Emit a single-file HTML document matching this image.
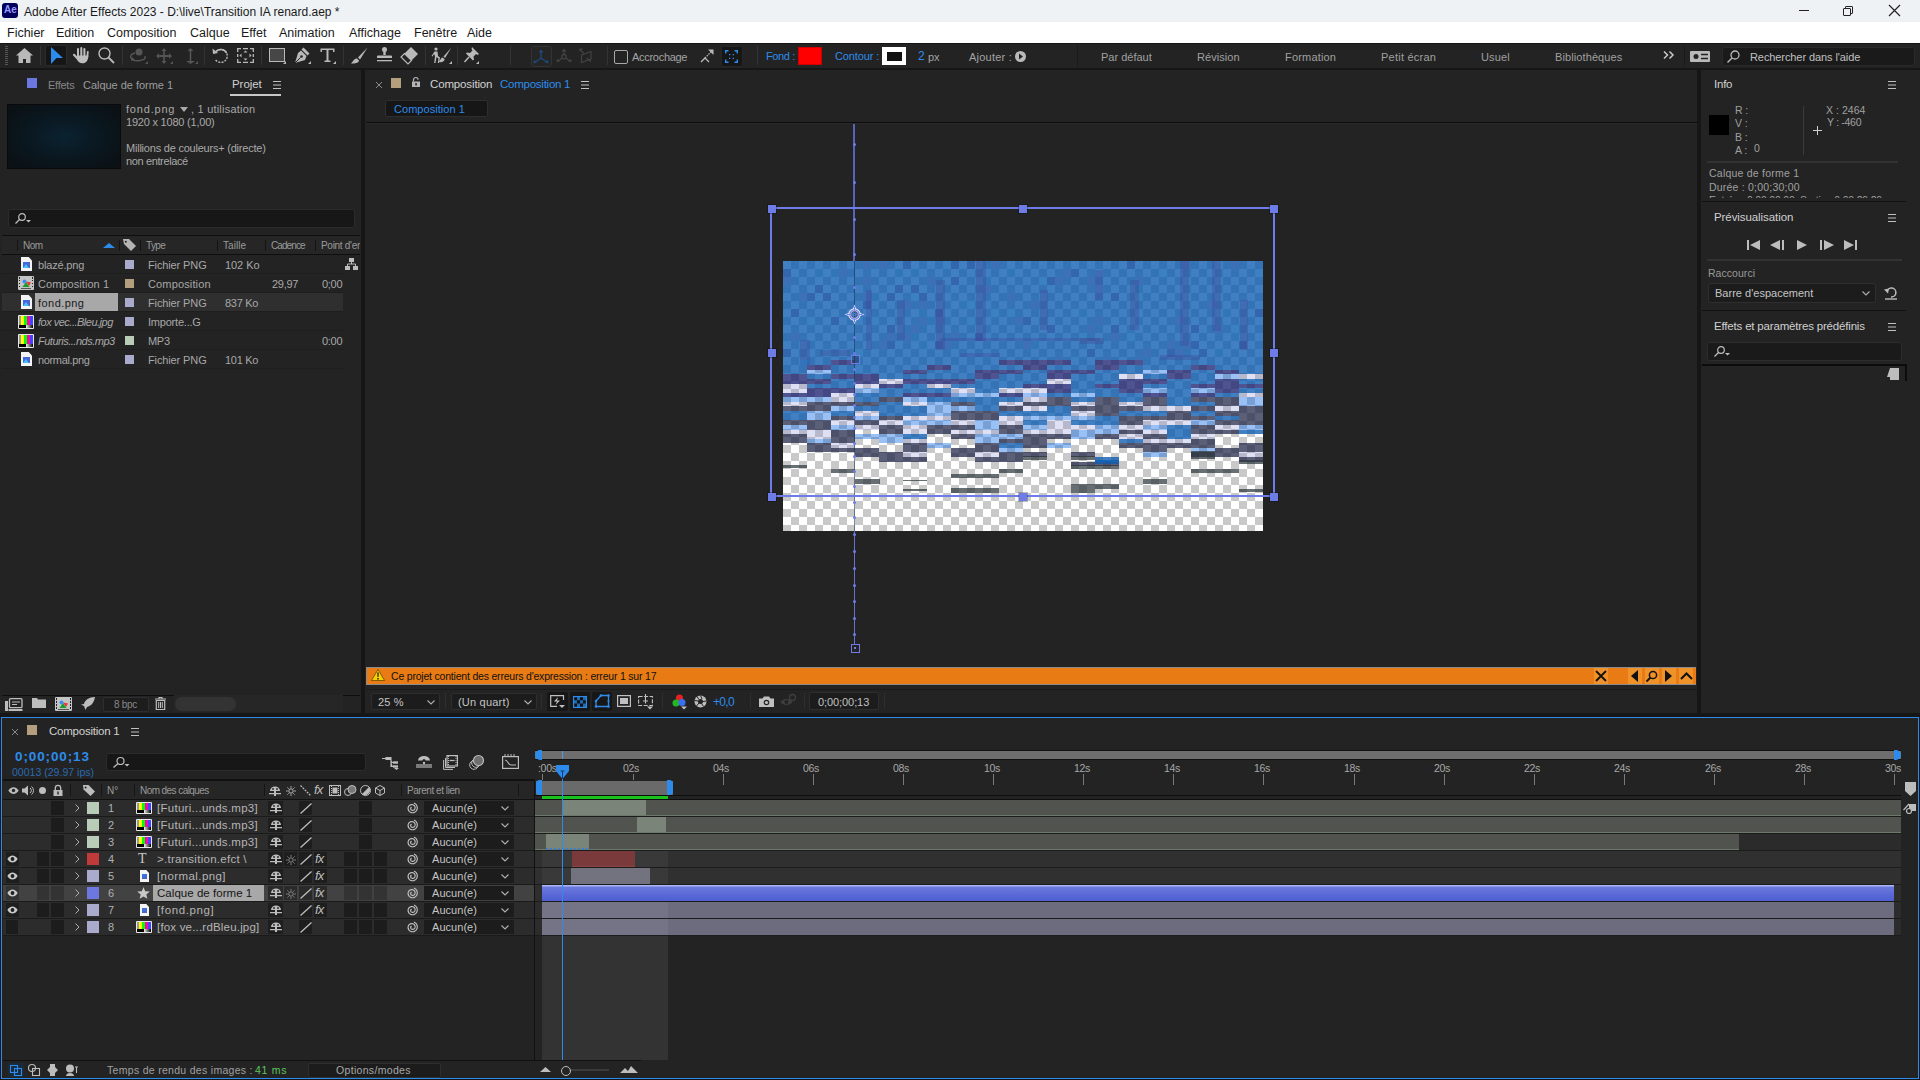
<!DOCTYPE html>
<html><head><meta charset="utf-8">
<style>
*{box-sizing:border-box;margin:0;padding:0}
html,body{width:1920px;height:1080px;overflow:hidden;background:#161616;font-family:"Liberation Sans",sans-serif;font-size:12px;color:#a2a2a2}
.a{position:absolute;white-space:pre}
.bl{color:#2d8ceb}
svg{position:absolute;overflow:visible}
</style></head><body>
<!-- TITLE BAR -->
<div class="a" style="left:0;top:0;width:1920px;height:22px;background:#eef2f5"></div>
<div class="a" style="left:2px;top:3px;width:16px;height:15px;background:#00005b;border-radius:3px"></div>
<div class="a" style="left:4px;top:4px;font-size:10px;font-weight:bold;color:#9999ff">Ae</div>
<div class="a" style="left:24px;top:5px;font-size:12px;color:#1a1a1a">Adobe After Effects 2023 - D:\live\Transition IA renard.aep *</div>
<!-- window controls -->
<div class="a" style="left:1799px;top:10px;width:10px;height:1px;background:#222"></div>
<div class="a" style="left:1845px;top:6px;width:8px;height:8px;border:1px solid #222;border-radius:1px"></div>
<div class="a" style="left:1843px;top:8px;width:8px;height:8px;border:1px solid #222;background:#eef2f5;border-radius:1px"></div>
<svg style="left:1889px;top:5px" width="11" height="11"><path d="M0 0L11 11M11 0L0 11" stroke="#222" stroke-width="1.2"/></svg>
<!-- MENU BAR -->
<div class="a" style="left:0;top:22px;width:1920px;height:21px;background:#fff"></div>
<div class="a" style="top:26px;left:0;font-size:12.5px;color:#1a1a1a">
<span class="a" style="top:0;left:7px">Fichier</span><span class="a" style="top:0;left:56px">Edition</span><span class="a" style="top:0;left:107px">Composition</span><span class="a" style="top:0;left:190px">Calque</span><span class="a" style="top:0;left:241px">Effet</span><span class="a" style="top:0;left:279px">Animation</span><span class="a" style="top:0;left:349px">Affichage</span><span class="a" style="top:0;left:414px">Fenêtre</span><span class="a" style="top:0;left:467px">Aide</span>
</div>
<!-- TOOLBAR -->
<div class="a" style="left:0;top:43px;width:1920px;height:25px;background:#232323"></div>
<div id="tb">
<div class="a" style="left:0;top:43px;width:1920px;height:1px;background:#141414"></div>
<!-- grip -->
<div class="a" style="left:5px;top:46px;width:3px;height:19px;background:repeating-linear-gradient(#555 0 1px,transparent 1px 2px)"></div>
<div class="a" style="left:40px;top:46px;width:1px;height:19px;background:#333"></div>
<div class="a" style="left:122px;top:46px;width:1px;height:19px;background:#333"></div>
<div class="a" style="left:204px;top:46px;width:1px;height:19px;background:#333"></div>
<div class="a" style="left:261px;top:46px;width:1px;height:19px;background:#333"></div>
<div class="a" style="left:343px;top:46px;width:1px;height:19px;background:#333"></div>
<div class="a" style="left:425px;top:46px;width:1px;height:19px;background:#333"></div>
<div class="a" style="left:457px;top:46px;width:1px;height:19px;background:#333"></div>
<div class="a" style="left:510px;top:46px;width:1px;height:19px;background:#333"></div>
<div class="a" style="left:607px;top:46px;width:1px;height:19px;background:#333"></div>
<div class="a" style="left:757px;top:46px;width:1px;height:19px;background:#333"></div>
<div class="a" style="left:1077px;top:43px;width:1px;height:24px;background:#1a1a1a"></div>
<div class="a" style="left:1684px;top:43px;width:1px;height:24px;background:#1a1a1a"></div>
<!-- home -->
<svg style="left:16px;top:48px" width="17" height="15" viewBox="0 0 17 15"><path d="M8.5 0L0 7.5h2.5V15h4.5v-4h3v4h4.5V7.5H17z" fill="#b9b9b9"/></svg>
<!-- selection box -->
<div class="a" style="left:45px;top:45px;width:22px;height:21px;background:#161616;border:1px solid #2a2a2a;border-radius:2px"></div>
<svg style="left:51px;top:47px" width="12" height="17" viewBox="0 0 12 17"><path d="M0 0L12 11L5.5 11L0 17z" fill="#2d8ceb"/></svg>
<!-- hand -->
<svg style="left:73px;top:47px" width="17" height="17" viewBox="0 0 17 17"><g stroke="#bdbdbd" stroke-linecap="round" fill="none"><path d="M5 10V2" stroke-width="2"/><path d="M8.3 10V1" stroke-width="2"/><path d="M11.4 10V2" stroke-width="2"/><path d="M14.2 11L14.8 5" stroke-width="1.8"/><path d="M1 7.8L5 12" stroke-width="2.2"/></g><path d="M4 8.5H15.5L14.5 13C13.5 15.5 11.5 16.3 9.3 16.3C6.8 16.3 5.2 15 4 12.5z" fill="#bdbdbd"/></svg>
<!-- zoom -->
<svg style="left:98px;top:47px" width="17" height="17" viewBox="0 0 17 17"><circle cx="6.5" cy="6.5" r="5.5" fill="none" stroke="#b9b9b9" stroke-width="1.4"/><path d="M10.5 10.5L16 16" stroke="#b9b9b9" stroke-width="1.8"/></svg>
<!-- rotation disabled -->
<svg style="left:129px;top:48px" width="19" height="16" viewBox="0 0 19 16"><circle cx="10" cy="4" r="3.5" fill="#555"/><path d="M6 5C2 6 1 8 2 10c1 2 5 3 9 2.5c4-.5 6-2 5-4.5" fill="none" stroke="#555" stroke-width="1.5"/><path d="M3 9l-1 4l4-1" fill="#555"/></svg>
<div class="a" style="left:145px;top:61px;width:0;height:0;border-left:3px solid transparent;border-bottom:3px solid #555"></div>
<!-- move disabled -->
<svg style="left:155px;top:48px" width="18" height="16" viewBox="0 0 18 16"><path d="M9 0L6.5 3h1.7v4H4V5.3L1 8l3 2.7V9h4.2v4H6.5L9 16l2.5-3H9.8V9H14v1.7L17 8l-3-2.7V7H9.8V3h1.7z" fill="#555"/></svg>
<div class="a" style="left:170px;top:61px;width:0;height:0;border-left:3px solid transparent;border-bottom:3px solid #555"></div>
<!-- z axis disabled -->
<svg style="left:183px;top:48px" width="15" height="16" viewBox="0 0 15 16"><path d="M7.5 0L4.5 3h2.2v10H3L7.5 16L12 13H8.3V3h2.2z" fill="#555"/></svg>
<div class="a" style="left:195px;top:61px;width:0;height:0;border-left:3px solid transparent;border-bottom:3px solid #555"></div>
<!-- rotate -->
<svg style="left:212px;top:47px" width="17" height="17" viewBox="0 0 17 17"><path d="M4 4.5A6.5 6.5 0 1 1 3 12" fill="none" stroke="#b9b9b9" stroke-width="1.4" stroke-dasharray="2 1.2"/><path d="M4 4.5A6.5 6.5 0 0 1 14.5 6" fill="none" stroke="#b9b9b9" stroke-width="1.5"/><path d="M0.5 1.5L1 7L6 6z" fill="#b9b9b9"/></svg>
<!-- roto frame -->
<svg style="left:237px;top:48px" width="17" height="15" viewBox="0 0 17 15"><path d="M0.7 4V0.7H4M6 0.7h5M13 0.7h3.3V4M16.3 6v3M16.3 11v3.3H13M11 14.3H6M4 14.3H0.7V11M0.7 9V6" fill="none" stroke="#b9b9b9" stroke-width="1.3"/><path d="M8.5 2.5L6.5 4.5h4zM8.5 12.5L6.5 10.5h4zM2.5 7.5L4.5 5.5v4zM14.5 7.5L12.5 5.5v4z" fill="#b9b9b9"/></svg>
<!-- rect -->
<div class="a" style="left:269px;top:48px;width:16px;height:14px;background:#474747;border:1.5px solid #b9b9b9"></div>
<div class="a" style="left:283px;top:61px;width:0;height:0;border-left:3px solid transparent;border-bottom:3px solid #b9b9b9"></div>
<!-- pen -->
<svg style="left:294px;top:47px" width="16" height="16" viewBox="0 0 16 16"><path d="M9.5 0.5L15.5 6.5L13.5 8.5L7.5 2.5z" fill="#b9b9b9"/><path d="M7 3.5L12.5 9L11 13L1 16L4 6z" fill="#b9b9b9"/><path d="M1 16L6.5 10.5" stroke="#232323" stroke-width="1"/><circle cx="7.5" cy="9.5" r="1.3" fill="#232323"/></svg>
<div class="a" style="left:308px;top:61px;width:0;height:0;border-left:3px solid transparent;border-bottom:3px solid #b9b9b9"></div>
<!-- T -->
<svg style="left:320px;top:48px" width="15" height="14" viewBox="0 0 15 14"><path d="M0.5 0.5H14.5V4H13V2H8.5V12.5H10.5V14H4.5V12.5H6.5V2H2V4H0.5z" fill="#b9b9b9"/></svg>
<div class="a" style="left:333px;top:61px;width:0;height:0;border-left:3px solid transparent;border-bottom:3px solid #b9b9b9"></div>
<!-- brush -->
<svg style="left:351px;top:47px" width="17" height="17" viewBox="0 0 17 17"><path d="M16.5 0.5L7 10.5L9 12.5z" fill="#b9b9b9"/><path d="M6 11.5C3 11.5 2.5 14 0 16.5C4 16.5 8 16 8 13.5z" fill="#b9b9b9"/></svg>
<!-- stamp -->
<svg style="left:376px;top:47px" width="17" height="16" viewBox="0 0 17 16"><circle cx="8.5" cy="2.5" r="2.5" fill="#b9b9b9"/><path d="M7.3 4h2.4v4H7.3z" fill="#b9b9b9"/><path d="M2 8.5h13a1 1 0 0 1 1 1V11H1V9.5a1 1 0 0 1 1-1z" fill="#b9b9b9"/><path d="M1 13h15v1.3H1z" fill="#b9b9b9"/></svg>
<!-- eraser -->
<svg style="left:401px;top:47px" width="17" height="17" viewBox="0 0 17 17"><path d="M10 0L17 7L10.5 13.5L3.5 6.5z" fill="#b9b9b9"/><path d="M3.5 6.5L10.5 13.5L7 17L0 10z" fill="none" stroke="#b9b9b9" stroke-width="1.2"/></svg>
<!-- puppet -->
<svg style="left:431px;top:47px" width="21" height="17" viewBox="0 0 21 17"><circle cx="5" cy="2" r="1.6" fill="#b9b9b9"/><path d="M3.5 4.5h3L7 9l2 1.5L8 16H6.8l.7-4.5L5.5 10L4.5 16H3.2L4 9L3 7L1.5 9.5L0.5 9z" fill="#b9b9b9"/><path d="M20.5 0.5L12.5 9.5L14 11z" fill="#b9b9b9"/><path d="M11.5 10.5C9.5 11 10 13 7.5 15C11 15.5 14 14.5 13.5 12z" fill="#b9b9b9"/></svg>
<div class="a" style="left:449px;top:61px;width:0;height:0;border-left:3px solid transparent;border-bottom:3px solid #b9b9b9"></div>
<!-- pin -->
<svg style="left:464px;top:47px" width="15" height="16" viewBox="0 0 15 16"><path d="M8 0L15 7L13.5 8L12 7L9.5 9.5L10 12.5L9 13.5L2 6.5L3 5.5L6 6L8.5 3.5L7.5 2z" fill="#b9b9b9"/><path d="M5 10L0.5 15" stroke="#b9b9b9" stroke-width="1.5"/></svg>
<div class="a" style="left:476px;top:61px;width:0;height:0;border-left:3px solid transparent;border-bottom:3px solid #b9b9b9"></div>
<!-- 3d axes -->
<div class="a" style="left:531px;top:46px;width:21px;height:21px;background:#252525;border:1px solid #333;border-radius:3px"></div>
<svg style="left:533px;top:49px" width="16" height="15" viewBox="0 0 16 15"><path d="M8 3V9L2.5 13M8 9L13.5 13" fill="none" stroke="#1e4a7a" stroke-width="1.3"/><path d="M8 0.5L5.5 3.5h5z M0.5 14.5L1 10.5L3.8 13.8z M15.5 14.5L15 10.5L12.2 13.8z" fill="#1e4a7a"/></svg>
<svg style="left:556px;top:48px" width="16" height="15" viewBox="0 0 16 15"><path d="M8 3V6.5M5.8 10.3L2.5 13M10.2 10.3L13.5 13" fill="none" stroke="#444" stroke-width="1.2"/><circle cx="8" cy="8.6" r="2.2" fill="none" stroke="#444" stroke-width="1.2"/><path d="M8 0.5L5.5 3.5h5z M0.5 14L1 10.5L3.8 13.6z M15.5 14L15 10.5L12.2 13.6z" fill="#444"/></svg>
<svg style="left:579px;top:48px" width="14" height="15" viewBox="0 0 14 15"><path d="M2.5 7L12 3.5V11L2.5 14.5z" fill="none" stroke="#444" stroke-width="1.1"/><path d="M5 5.5L1.5 2M7.5 10L12 13.5" stroke="#444" stroke-width="1.1"/><path d="M0.5 0.5H4L0.5 4z" fill="#444"/></svg>
<!-- checkbox accrochage -->
<div class="a" style="left:614px;top:50px;width:14px;height:14px;border:1.5px solid #a8a8a8;border-radius:2px"></div>
<div class="a" style="left:632px;top:51px;font-size:11px;color:#a3a3a3;letter-spacing:-0.29px">Accrochage</div>
<svg style="left:700px;top:49px" width="14" height="14" viewBox="0 0 14 14"><path d="M1 13L5 9L9 13" fill="none" stroke="#b9b9b9" stroke-width="1.3"/><path d="M5 9L11 3" stroke="#b9b9b9" stroke-width="1.2" stroke-dasharray="1.5 1"/><path d="M13.5 0.5V6L8 0.5z" fill="#b9b9b9"/></svg>
<div class="a" style="left:721px;top:46px;width:22px;height:21px;background:#161616;border:1px solid #262626;border-radius:2px"></div>
<svg style="left:725px;top:50px" width="13" height="13" viewBox="0 0 13 13"><path d="M0.7 3.5V0.7H3.5M9.5 0.7h2.8V3.5M12.3 9.5v2.8H9.5M3.5 12.3H0.7V9.5" fill="none" stroke="#2d8ceb" stroke-width="1.4"/><path d="M4 4h1.3v1.3H4zM7.7 4H9v1.3H7.7zM4 7.7h1.3V9H4zM7.7 7.7H9V9H7.7z" fill="#2d8ceb"/></svg>
<!-- fond / contour -->
<div class="a bl" style="left:766px;top:50px;font-size:11px;letter-spacing:-0.4px">Fond :</div>
<div class="a" style="left:798px;top:47px;width:24px;height:18px;background:#ff0000;border:1px solid #c00"></div>
<div class="a bl" style="left:835px;top:50px;font-size:11px;letter-spacing:-0.13px">Contour :</div>
<div class="a" style="left:882px;top:47px;width:24px;height:18px;background:#fff"></div>
<div class="a" style="left:887px;top:52px;width:15px;height:9px;background:#111;border:0"></div>
<div class="a bl" style="left:918px;top:49px;font-size:12px">2</div>
<div class="a" style="left:928px;top:51px;font-size:11px;color:#a3a3a3">px</div>
<div class="a" style="left:969px;top:51px;font-size:11px;color:#a3a3a3;letter-spacing:0.22px">Ajouter :</div>
<svg style="left:1015px;top:51px" width="11" height="11" viewBox="0 0 11 11"><circle cx="5.5" cy="5.5" r="5.5" fill="#b9b9b9"/><path d="M4 2.5L8 5.5L4 8.5z" fill="#232323"/></svg>
<!-- workspaces -->
<div class="a" style="left:1101px;top:51px;font-size:11px;color:#a0a0a0;letter-spacing:0.0px">Par défaut</div>
<div class="a" style="left:1197px;top:51px;font-size:11px;color:#a0a0a0;letter-spacing:0.06px">Révision</div>
<div class="a" style="left:1285px;top:51px;font-size:11px;color:#a0a0a0;letter-spacing:0.18px">Formation</div>
<div class="a" style="left:1381px;top:51px;font-size:11px;color:#a0a0a0;letter-spacing:0.24px">Petit écran</div>
<div class="a" style="left:1481px;top:51px;font-size:11px;color:#a0a0a0;letter-spacing:0.14px">Usuel</div>
<div class="a" style="left:1555px;top:51px;font-size:11px;color:#a0a0a0;letter-spacing:0.1px">Bibliothèques</div>
<svg style="left:1663px;top:51px" width="12" height="8" viewBox="0 0 12 8"><path d="M1 0.5L4.5 4L1 7.5M6.5 0.5L10 4L6.5 7.5" fill="none" stroke="#c8c8c8" stroke-width="1.5"/></svg>
<svg style="left:1690px;top:51px" width="20" height="11" viewBox="0 0 20 11"><rect x="0" y="0" width="20" height="11" rx="1" fill="#b9b9b9"/><circle cx="6" cy="5.5" r="2.5" fill="#232323"/><path d="M11 3.5h7M11 7.5h7" stroke="#232323" stroke-width="1.5"/></svg>
<div class="a" style="left:1722px;top:47px;width:193px;height:19px;background:#1a1a1a;border:1px solid #2a2a2a;border-radius:3px"></div>
<svg style="left:1727px;top:50px" width="13" height="13" viewBox="0 0 13 13"><circle cx="8" cy="5" r="4" fill="none" stroke="#b9b9b9" stroke-width="1.3"/><path d="M5 8L0.5 12.5" stroke="#b9b9b9" stroke-width="1.5"/></svg>
<div class="a" style="left:1750px;top:51px;font-size:11px;color:#c0c0c0;letter-spacing:-0.09px">Rechercher dans l'aide</div>
</div>

<!-- PROJECT PANEL -->
<div class="a" style="left:0;top:70px;width:361px;height:643px;background:#232323"></div>
<div id="proj">
<div class="a" style="left:27px;top:78px;width:10px;height:10px;background:#6c78e0"></div>
<div class="a" style="left:48px;top:79px;font-size:11px;color:#868686;letter-spacing:-0.25px">Effets</div>
<div class="a" style="left:83px;top:79px;font-size:11px;color:#9c9c9c;letter-spacing:-0.03px">Calque de forme 1</div>
<div class="a" style="left:232px;top:78px;font-size:11.5px;color:#cfcfcf;letter-spacing:-0.05px">Projet</div>
<div class="a" style="left:230px;top:94px;width:51px;height:2px;background:#c8c8c8"></div>
<svg style="left:273px;top:81px" width="8" height="8"><path d="M0 0.5H8M0 4H8M0 7.5H8" stroke="#c0c0c0" stroke-width="1"/></svg>
<div class="a" style="left:7px;top:104px;width:114px;height:65px;background:radial-gradient(ellipse at 50% 50%,#0b2230 0%,#0a151c 60%,#0b1013 100%);border:1px solid #0a0a0a"></div>
<div class="a" style="left:126px;top:103px;font-size:11px;color:#a9a9a9;letter-spacing:0.81px;line-height:13px">fond.png</div>
<div class="a" style="left:180px;top:107px;width:0;height:0;border-left:4px solid transparent;border-right:4px solid transparent;border-top:5px solid #a9a9a9"></div>
<div class="a" style="left:191px;top:103px;font-size:11px;color:#a9a9a9;letter-spacing:0.21px;line-height:13px">, 1 utilisation</div>
<div class="a" style="left:126px;top:116px;font-size:11px;color:#a9a9a9;letter-spacing:-0.21px;line-height:13px">1920 x 1080 (1,00)</div>
<div class="a" style="left:126px;top:142px;font-size:11px;color:#a9a9a9;letter-spacing:-0.22px;line-height:13px">Millions de couleurs+ (directe)</div>
<div class="a" style="left:126px;top:155px;font-size:11px;color:#a9a9a9;letter-spacing:-0.37px;line-height:13px">non entrelacé</div>
<div class="a" style="left:8px;top:209px;width:347px;height:19px;background:#171717;border:1px solid #2c2c2c;border-radius:3px"></div>
<svg style="left:15px;top:213px" width="16" height="11" viewBox="0 0 16 11"><circle cx="7" cy="4" r="3.3" fill="none" stroke="#bdbdbd" stroke-width="1.2"/><path d="M4.5 6.5L0.5 10.5" stroke="#bdbdbd" stroke-width="1.3"/><path d="M11 7h5l-2.5 2.5z" fill="#bdbdbd"/></svg>
<div class="a" style="left:2px;top:235px;width:358px;height:1px;background:#0e0e0e"></div>
<div class="a" style="left:2px;top:236px;width:358px;height:18px;background:#262626"></div>
<div class="a" style="left:2px;top:254px;width:358px;height:1px;background:#0e0e0e"></div>
<div class="a" style="left:17px;top:240px;width:1px;height:11px;background:#141414"></div>
<div class="a" style="left:119px;top:240px;width:1px;height:11px;background:#141414"></div>
<div class="a" style="left:140px;top:240px;width:1px;height:11px;background:#141414"></div>
<div class="a" style="left:217px;top:240px;width:1px;height:11px;background:#141414"></div>
<div class="a" style="left:265px;top:240px;width:1px;height:11px;background:#141414"></div>
<div class="a" style="left:315px;top:240px;width:1px;height:11px;background:#141414"></div>
<div class="a" style="left:23px;top:240px;font-size:10px;color:#9a9a9a;letter-spacing:-0.46px">Nom</div>
<div class="a" style="left:103px;top:243px;width:0;height:0;border-left:6px solid transparent;border-right:6px solid transparent;border-bottom:5px solid #2d8ceb"></div>
<svg style="left:123px;top:239px" width="13" height="12" viewBox="0 0 13 12"><path d="M0 0H6L13 7L8 12L1 5z" fill="#b5b5b5"/><circle cx="2.8" cy="2.8" r="1" fill="#262626"/></svg>
<div class="a" style="left:146px;top:240px;font-size:10px;color:#9a9a9a;letter-spacing:-0.66px">Type</div>
<div class="a" style="left:223px;top:240px;font-size:10px;color:#9a9a9a;letter-spacing:0.04px">Taille</div>
<div class="a" style="left:271px;top:240px;font-size:10px;color:#9a9a9a;letter-spacing:-0.91px">Cadence</div>
<div class="a" style="left:321px;top:240px;font-size:10px;color:#9a9a9a;letter-spacing:-0.3px;width:39px;overflow:hidden">Point d'en</div>
<div class="a" style="left:2px;top:255px;width:341px;height:18px;background:#232323"></div>
<div class="a" style="left:2px;top:273px;width:341px;height:1px;background:#1e1e1e"></div>
<div class="a" style="left:21px;top:257px;width:11px;height:14px;background:#f4f4f4;clip-path:polygon(0 0,70% 0,100% 25%,100% 100%,0 100%)"></div><div class="a" style="left:23px;top:262px;width:7px;height:6px;background:linear-gradient(160deg,#3a6fe0,#5a5ac8)"></div><div class="a" style="left:23px;top:264px;width:0;height:0;border-left:3.5px solid transparent;border-right:3.5px solid transparent;border-bottom:4px solid #41c3ff"></div>
<div class="a" style="left:38px;top:259px;font-size:11px;color:#a8a8a8;letter-spacing:-0.18px">blazé.png</div>
<div class="a" style="left:125px;top:260px;width:9px;height:9px;background:#aaaacc"></div>
<div class="a" style="left:148px;top:259px;font-size:11px;color:#a8a8a8;letter-spacing:-0.12px">Fichier PNG</div>
<div class="a" style="left:225px;top:259px;font-size:11px;color:#a8a8a8;letter-spacing:-0.06px">102 Ko</div>
<div class="a" style="left:2px;top:274px;width:341px;height:18px;background:#232323"></div>
<div class="a" style="left:2px;top:292px;width:341px;height:1px;background:#1e1e1e"></div>
<div class="a" style="left:18px;top:276px;width:16px;height:14px;background:#c4c4c4;border-radius:1px"></div><div class="a" style="left:19px;top:277px;width:1px;height:12px;background:repeating-linear-gradient(#222 0 1.5px,transparent 1.5px 3px)"></div><div class="a" style="left:32px;top:277px;width:1px;height:12px;background:repeating-linear-gradient(#222 0 1.5px,transparent 1.5px 3px)"></div><div class="a" style="left:21px;top:288px;width:10px;height:1px;background:#555"></div><svg style="left:22px;top:279px" width="9" height="8" viewBox="0 0 9 8"><path d="M4 2.5L9 3.5L7 7z" fill="#e33"/><path d="M4 3L7.5 8H0.5z" fill="#1a9e2a"/><circle cx="2.5" cy="2.5" r="2" fill="#3a8ef0"/></svg>
<div class="a" style="left:38px;top:278px;font-size:11px;color:#a8a8a8;letter-spacing:0.06px">Composition 1</div>
<div class="a" style="left:125px;top:279px;width:9px;height:9px;background:#b39f7e"></div>
<div class="a" style="left:148px;top:278px;font-size:11px;color:#a8a8a8;letter-spacing:0.14px">Composition</div>
<div class="a" style="left:272px;top:278px;font-size:11px;color:#a8a8a8;letter-spacing:-0.26px">29,97</div>
<div class="a" style="left:322px;top:278px;font-size:11px;color:#a8a8a8;letter-spacing:-0.3px">0;00</div>
<div class="a" style="left:2px;top:293px;width:341px;height:18px;background:#2f2f2f"></div>
<div class="a" style="left:2px;top:311px;width:341px;height:1px;background:#1e1e1e"></div>
<div class="a" style="left:35px;top:293px;width:83px;height:18px;background:#a8a8a8"></div>
<div class="a" style="left:21px;top:295px;width:11px;height:14px;background:#f4f4f4;clip-path:polygon(0 0,70% 0,100% 25%,100% 100%,0 100%)"></div><div class="a" style="left:23px;top:300px;width:7px;height:6px;background:linear-gradient(160deg,#3a6fe0,#5a5ac8)"></div><div class="a" style="left:23px;top:302px;width:0;height:0;border-left:3.5px solid transparent;border-right:3.5px solid transparent;border-bottom:4px solid #41c3ff"></div>
<div class="a" style="left:38px;top:297px;font-size:11px;color:#1a1a1a;letter-spacing:0.45px">fond.png</div>
<div class="a" style="left:125px;top:298px;width:9px;height:9px;background:#aaaacc"></div>
<div class="a" style="left:148px;top:297px;font-size:11px;color:#a8a8a8;letter-spacing:-0.12px">Fichier PNG</div>
<div class="a" style="left:225px;top:297px;font-size:11px;color:#a8a8a8;letter-spacing:-0.3px">837 Ko</div>
<div class="a" style="left:2px;top:312px;width:341px;height:18px;background:#232323"></div>
<div class="a" style="left:2px;top:330px;width:341px;height:1px;background:#1e1e1e"></div>
<div class="a" style="left:18px;top:315px;width:16px;height:14px;background:#e8e8e8;border-radius:1px"></div><div class="a" style="left:19px;top:316px;width:14px;height:9px;background:linear-gradient(90deg,#999 0 14%,#ff0 14% 35%,#0f0 35% 57%,#f0a 57% 78%,#44f 78%)"></div><div class="a" style="left:19px;top:325px;width:14px;height:3px;background:linear-gradient(90deg,#000 0 50%,#eee 50%,#000)"></div>
<div class="a" style="left:38px;top:316px;font-size:11px;color:#a8a8a8;font-style:italic;letter-spacing:-0.5px">fox vec...Bleu.jpg</div>
<div class="a" style="left:125px;top:317px;width:9px;height:9px;background:#aaaacc"></div>
<div class="a" style="left:148px;top:316px;font-size:11px;color:#a8a8a8;letter-spacing:-0.21px">Importe...G</div>
<div class="a" style="left:2px;top:331px;width:341px;height:18px;background:#232323"></div>
<div class="a" style="left:2px;top:349px;width:341px;height:1px;background:#1e1e1e"></div>
<div class="a" style="left:18px;top:334px;width:16px;height:14px;background:#e8e8e8;border-radius:1px"></div><div class="a" style="left:19px;top:335px;width:14px;height:9px;background:linear-gradient(90deg,#999 0 14%,#ff0 14% 35%,#0f0 35% 57%,#f0a 57% 78%,#44f 78%)"></div><div class="a" style="left:19px;top:344px;width:14px;height:3px;background:linear-gradient(90deg,#000 0 50%,#eee 50%,#000)"></div>
<div class="a" style="left:38px;top:335px;font-size:11px;color:#a8a8a8;font-style:italic;letter-spacing:-0.49px">Futuris...nds.mp3</div>
<div class="a" style="left:125px;top:336px;width:9px;height:9px;background:#b8ccb8"></div>
<div class="a" style="left:148px;top:335px;font-size:11px;color:#a8a8a8;letter-spacing:-0.3px">MP3</div>
<div class="a" style="left:322px;top:335px;font-size:11px;color:#a8a8a8;letter-spacing:-0.3px">0:00</div>
<div class="a" style="left:2px;top:350px;width:341px;height:18px;background:#232323"></div>
<div class="a" style="left:2px;top:368px;width:341px;height:1px;background:#1e1e1e"></div>
<div class="a" style="left:21px;top:352px;width:11px;height:14px;background:#f4f4f4;clip-path:polygon(0 0,70% 0,100% 25%,100% 100%,0 100%)"></div><div class="a" style="left:23px;top:357px;width:7px;height:6px;background:linear-gradient(160deg,#3a6fe0,#5a5ac8)"></div><div class="a" style="left:23px;top:359px;width:0;height:0;border-left:3.5px solid transparent;border-right:3.5px solid transparent;border-bottom:4px solid #41c3ff"></div>
<div class="a" style="left:38px;top:354px;font-size:11px;color:#a8a8a8;letter-spacing:-0.35px">normal.png</div>
<div class="a" style="left:125px;top:355px;width:9px;height:9px;background:#aaaacc"></div>
<div class="a" style="left:148px;top:354px;font-size:11px;color:#a8a8a8;letter-spacing:-0.12px">Fichier PNG</div>
<div class="a" style="left:225px;top:354px;font-size:11px;color:#a8a8a8;letter-spacing:-0.3px">101 Ko</div>
<svg style="left:345px;top:258px" width="13" height="12" viewBox="0 0 13 12"><rect x="4" y="0" width="5" height="4" fill="#bdbdbd"/><path d="M6.5 4V6M2.5 8V6H10.5V8" fill="none" stroke="#bdbdbd" stroke-width="1"/><rect x="0" y="8" width="5" height="4" fill="#bdbdbd"/><rect x="8" y="8" width="5" height="4" fill="#bdbdbd"/></svg>
<div class="a" style="left:2px;top:695px;width:172px;height:1px;background:#0e0e0e"></div>
<div class="a" style="left:343px;top:695px;width:17px;height:1px;background:#0e0e0e"></div>
<div class="a" style="left:174px;top:695px;width:169px;height:17px;background:#262626"></div>
<div class="a" style="left:175px;top:697px;width:61px;height:14px;background:#333;border-radius:7px"></div>
<svg style="left:5px;top:698px" width="18" height="13" viewBox="0 0 18 13"><path d="M0 3h3V13H0zM3.5 11h14v2h-14z" fill="#bdbdbd"/><rect x="4.5" y="0.7" width="12.5" height="9" rx="1" fill="none" stroke="#bdbdbd" stroke-width="1.3"/><path d="M7 4h8M7 6.5h5" stroke="#bdbdbd" stroke-width="1.2"/></svg>
<svg style="left:32px;top:698px" width="14" height="10" viewBox="0 0 14 10"><path d="M0 0H5L6 1.5H14V10H0z" fill="#bdbdbd"/></svg>
<div class="a" style="left:55px;top:697px;width:17px;height:14px;background:#c4c4c4;border-radius:1px"></div><div class="a" style="left:56px;top:698px;width:1px;height:12px;background:repeating-linear-gradient(#222 0 1.5px,transparent 1.5px 3px)"></div><div class="a" style="left:70px;top:698px;width:1px;height:12px;background:repeating-linear-gradient(#222 0 1.5px,transparent 1.5px 3px)"></div><div class="a" style="left:58px;top:709px;width:11px;height:1px;background:#555"></div><svg style="left:59px;top:700px" width="9" height="8" viewBox="0 0 9 8"><path d="M4 2.5L9 3.5L7 7z" fill="#e33"/><path d="M4 3L7.5 8H0.5z" fill="#1a9e2a"/><circle cx="2.5" cy="2.5" r="2" fill="#3a8ef0"/></svg>
<svg style="left:81px;top:697px" width="14" height="14" viewBox="0 0 14 14"><path d="M14 0C8 0 4 3 3 7L0 7.5L3 9L4.5 13L6 10C10 9 13 6 14 0z" fill="#bdbdbd"/></svg>
<div class="a" style="left:103px;top:697px;width:46px;height:15px;background:#1d1d1d;border:1px solid #2e2e2e;border-radius:2px"></div>
<div class="a" style="left:114px;top:699px;font-size:10px;color:#888;letter-spacing:-0.3px">8 bpc</div>
<svg style="left:155px;top:697px" width="11" height="13" viewBox="0 0 11 13"><path d="M0 2H11M4 2V0.5H7V2" fill="none" stroke="#bdbdbd" stroke-width="1.2"/><path d="M1.3 3.5H9.7V12.5H1.3z" fill="none" stroke="#bdbdbd" stroke-width="1.2"/><path d="M3.7 5V11M5.5 5V11M7.3 5V11" stroke="#bdbdbd" stroke-width="1"/></svg>
</div>
<div class="a" style="left:365px;top:70px;width:1332px;height:643px;background:#232323;"></div>
<svg style="left:376px;top:82px" width="6" height="6"><path d="M0 0L6 6M6 0L0 6" stroke="#8a8a8a" stroke-width="1"/></svg>
<div class="a" style="left:391px;top:78px;width:10px;height:10px;background:#b39f7e;"></div>
<svg style="left:411px;top:77px" width="10" height="10" viewBox="0 0 10 10"><path d="M2.5 4.5V2.8a2.3 2.3 0 0 1 4.6 0" fill="none" stroke="#b5b5b5" stroke-width="1.2"/><rect x="1" y="4.5" width="8" height="5.5" fill="#b5b5b5"/><rect x="4.3" y="6" width="1.5" height="2.5" fill="#232323"/></svg>
<div class="a" style="left:430px;top:78px;font-size:11.5px;color:#d2d2d2;letter-spacing:-0.14px">Composition</div>
<div class="a" style="left:500px;top:78px;font-size:11.5px;color:#2d8ceb;letter-spacing:-0.25px">Composition 1</div>
<svg style="left:581px;top:81px" width="8" height="8"><path d="M0 0.5H8M0 4H8M0 7.5H8" stroke="#c0c0c0" stroke-width="1"/></svg>
<div class="a" style="left:385px;top:100px;width:103px;height:17px;background:#161616;border:1px solid #2e2e2e;border-radius:2px"></div>
<div class="a" style="left:394px;top:103px;font-size:11px;color:#2d8ceb;letter-spacing:0.05px">Composition 1</div>
<div class="a" style="left:366px;top:122px;width:1331px;height:1px;background:#0c0c0c;"></div>
<div class="a" style="left:366px;top:123px;width:1331px;height:1px;background:#2a2a2a;"></div>
<div class="a" style="left:783px;top:261px;width:480px;height:270px;background:#ffffff;background-image:linear-gradient(45deg,#c9c9c9 25%,transparent 25%,transparent 75%,#c9c9c9 75%),linear-gradient(45deg,#c9c9c9 25%,transparent 25%,transparent 75%,#c9c9c9 75%);background-size:16px 16px;background-position:0 0,8px 8px"></div>
<div class="a" style="left:783px;top:261px;width:480px;height:99px;background:rgba(9,91,177,0.78);"></div>
<div class="a" style="left:863px;top:261px;width:8px;height:8px;background:rgba(60,60,150,0.22);"></div>
<div class="a" style="left:879px;top:261px;width:8px;height:8px;background:rgba(60,60,150,0.22);"></div>
<div class="a" style="left:903px;top:261px;width:8px;height:8px;background:rgba(60,60,150,0.22);"></div>
<div class="a" style="left:943px;top:261px;width:8px;height:8px;background:rgba(40,140,190,0.15);"></div>
<div class="a" style="left:951px;top:261px;width:8px;height:8px;background:rgba(60,60,150,0.22);"></div>
<div class="a" style="left:967px;top:261px;width:8px;height:8px;background:rgba(60,60,150,0.22);"></div>
<div class="a" style="left:991px;top:261px;width:8px;height:8px;background:rgba(60,60,150,0.22);"></div>
<div class="a" style="left:1127px;top:261px;width:8px;height:8px;background:rgba(60,60,150,0.22);"></div>
<div class="a" style="left:1183px;top:261px;width:8px;height:8px;background:rgba(60,60,150,0.22);"></div>
<div class="a" style="left:1231px;top:261px;width:8px;height:8px;background:rgba(60,60,150,0.22);"></div>
<div class="a" style="left:783px;top:269px;width:8px;height:8px;background:rgba(60,60,150,0.22);"></div>
<div class="a" style="left:815px;top:269px;width:8px;height:8px;background:rgba(40,140,190,0.15);"></div>
<div class="a" style="left:831px;top:269px;width:8px;height:8px;background:rgba(40,140,190,0.15);"></div>
<div class="a" style="left:839px;top:269px;width:8px;height:8px;background:rgba(60,60,150,0.22);"></div>
<div class="a" style="left:895px;top:269px;width:8px;height:8px;background:rgba(40,140,190,0.15);"></div>
<div class="a" style="left:911px;top:269px;width:8px;height:8px;background:rgba(40,140,190,0.15);"></div>
<div class="a" style="left:1007px;top:269px;width:8px;height:8px;background:rgba(40,140,190,0.15);"></div>
<div class="a" style="left:1063px;top:269px;width:8px;height:8px;background:rgba(60,60,150,0.22);"></div>
<div class="a" style="left:1071px;top:269px;width:8px;height:8px;background:rgba(60,60,150,0.22);"></div>
<div class="a" style="left:1159px;top:269px;width:8px;height:8px;background:rgba(40,140,190,0.15);"></div>
<div class="a" style="left:1255px;top:269px;width:8px;height:8px;background:rgba(40,140,190,0.15);"></div>
<div class="a" style="left:783px;top:277px;width:8px;height:8px;background:rgba(60,60,150,0.22);"></div>
<div class="a" style="left:863px;top:277px;width:8px;height:8px;background:rgba(60,60,150,0.22);"></div>
<div class="a" style="left:927px;top:277px;width:8px;height:8px;background:rgba(60,60,150,0.22);"></div>
<div class="a" style="left:951px;top:277px;width:8px;height:8px;background:rgba(60,60,150,0.22);"></div>
<div class="a" style="left:983px;top:277px;width:8px;height:8px;background:rgba(40,140,190,0.15);"></div>
<div class="a" style="left:1039px;top:277px;width:8px;height:8px;background:rgba(40,140,190,0.15);"></div>
<div class="a" style="left:1047px;top:277px;width:8px;height:8px;background:rgba(60,60,150,0.22);"></div>
<div class="a" style="left:1055px;top:277px;width:8px;height:8px;background:rgba(60,60,150,0.22);"></div>
<div class="a" style="left:1087px;top:277px;width:8px;height:8px;background:rgba(60,60,150,0.22);"></div>
<div class="a" style="left:1135px;top:277px;width:8px;height:8px;background:rgba(60,60,150,0.22);"></div>
<div class="a" style="left:815px;top:285px;width:8px;height:8px;background:rgba(60,60,150,0.22);"></div>
<div class="a" style="left:895px;top:285px;width:8px;height:8px;background:rgba(60,60,150,0.22);"></div>
<div class="a" style="left:911px;top:285px;width:8px;height:8px;background:rgba(60,60,150,0.22);"></div>
<div class="a" style="left:983px;top:285px;width:8px;height:8px;background:rgba(60,60,150,0.22);"></div>
<div class="a" style="left:1135px;top:285px;width:8px;height:8px;background:rgba(40,140,190,0.15);"></div>
<div class="a" style="left:799px;top:293px;width:8px;height:8px;background:rgba(60,60,150,0.22);"></div>
<div class="a" style="left:807px;top:293px;width:8px;height:8px;background:rgba(60,60,150,0.22);"></div>
<div class="a" style="left:823px;top:293px;width:8px;height:8px;background:rgba(60,60,150,0.22);"></div>
<div class="a" style="left:863px;top:293px;width:8px;height:8px;background:rgba(60,60,150,0.22);"></div>
<div class="a" style="left:871px;top:293px;width:8px;height:8px;background:rgba(40,140,190,0.15);"></div>
<div class="a" style="left:887px;top:293px;width:8px;height:8px;background:rgba(60,60,150,0.22);"></div>
<div class="a" style="left:911px;top:293px;width:8px;height:8px;background:rgba(40,140,190,0.15);"></div>
<div class="a" style="left:919px;top:293px;width:8px;height:8px;background:rgba(60,60,150,0.22);"></div>
<div class="a" style="left:1007px;top:293px;width:8px;height:8px;background:rgba(60,60,150,0.22);"></div>
<div class="a" style="left:1111px;top:293px;width:8px;height:8px;background:rgba(60,60,150,0.22);"></div>
<div class="a" style="left:1135px;top:293px;width:8px;height:8px;background:rgba(40,140,190,0.15);"></div>
<div class="a" style="left:863px;top:301px;width:8px;height:8px;background:rgba(60,60,150,0.22);"></div>
<div class="a" style="left:903px;top:301px;width:8px;height:8px;background:rgba(60,60,150,0.22);"></div>
<div class="a" style="left:919px;top:301px;width:8px;height:8px;background:rgba(60,60,150,0.22);"></div>
<div class="a" style="left:959px;top:301px;width:8px;height:8px;background:rgba(40,140,190,0.15);"></div>
<div class="a" style="left:967px;top:301px;width:8px;height:8px;background:rgba(40,140,190,0.15);"></div>
<div class="a" style="left:1031px;top:301px;width:8px;height:8px;background:rgba(60,60,150,0.22);"></div>
<div class="a" style="left:1207px;top:301px;width:8px;height:8px;background:rgba(60,60,150,0.22);"></div>
<div class="a" style="left:791px;top:309px;width:8px;height:8px;background:rgba(60,60,150,0.22);"></div>
<div class="a" style="left:847px;top:309px;width:8px;height:8px;background:rgba(40,140,190,0.15);"></div>
<div class="a" style="left:919px;top:309px;width:8px;height:8px;background:rgba(40,140,190,0.15);"></div>
<div class="a" style="left:935px;top:309px;width:8px;height:8px;background:rgba(60,60,150,0.22);"></div>
<div class="a" style="left:991px;top:309px;width:8px;height:8px;background:rgba(40,140,190,0.15);"></div>
<div class="a" style="left:1007px;top:309px;width:8px;height:8px;background:rgba(40,140,190,0.15);"></div>
<div class="a" style="left:1079px;top:309px;width:8px;height:8px;background:rgba(40,140,190,0.15);"></div>
<div class="a" style="left:1223px;top:309px;width:8px;height:8px;background:rgba(40,140,190,0.15);"></div>
<div class="a" style="left:1255px;top:309px;width:8px;height:8px;background:rgba(60,60,150,0.22);"></div>
<div class="a" style="left:807px;top:317px;width:8px;height:8px;background:rgba(40,140,190,0.15);"></div>
<div class="a" style="left:831px;top:317px;width:8px;height:8px;background:rgba(60,60,150,0.22);"></div>
<div class="a" style="left:871px;top:317px;width:8px;height:8px;background:rgba(40,140,190,0.15);"></div>
<div class="a" style="left:919px;top:317px;width:8px;height:8px;background:rgba(60,60,150,0.22);"></div>
<div class="a" style="left:927px;top:317px;width:8px;height:8px;background:rgba(40,140,190,0.15);"></div>
<div class="a" style="left:935px;top:317px;width:8px;height:8px;background:rgba(60,60,150,0.22);"></div>
<div class="a" style="left:967px;top:317px;width:8px;height:8px;background:rgba(40,140,190,0.15);"></div>
<div class="a" style="left:1015px;top:317px;width:8px;height:8px;background:rgba(60,60,150,0.22);"></div>
<div class="a" style="left:1023px;top:317px;width:8px;height:8px;background:rgba(60,60,150,0.22);"></div>
<div class="a" style="left:1095px;top:317px;width:8px;height:8px;background:rgba(60,60,150,0.22);"></div>
<div class="a" style="left:1175px;top:317px;width:8px;height:8px;background:rgba(60,60,150,0.22);"></div>
<div class="a" style="left:887px;top:325px;width:8px;height:8px;background:rgba(60,60,150,0.22);"></div>
<div class="a" style="left:911px;top:325px;width:8px;height:8px;background:rgba(60,60,150,0.22);"></div>
<div class="a" style="left:1047px;top:325px;width:8px;height:8px;background:rgba(60,60,150,0.22);"></div>
<div class="a" style="left:1087px;top:325px;width:8px;height:8px;background:rgba(60,60,150,0.22);"></div>
<div class="a" style="left:1111px;top:325px;width:8px;height:8px;background:rgba(60,60,150,0.22);"></div>
<div class="a" style="left:1191px;top:325px;width:8px;height:8px;background:rgba(60,60,150,0.22);"></div>
<div class="a" style="left:1215px;top:325px;width:8px;height:8px;background:rgba(60,60,150,0.22);"></div>
<div class="a" style="left:1231px;top:325px;width:8px;height:8px;background:rgba(40,140,190,0.15);"></div>
<div class="a" style="left:791px;top:333px;width:8px;height:8px;background:rgba(60,60,150,0.22);"></div>
<div class="a" style="left:887px;top:333px;width:8px;height:8px;background:rgba(60,60,150,0.22);"></div>
<div class="a" style="left:903px;top:333px;width:8px;height:8px;background:rgba(60,60,150,0.22);"></div>
<div class="a" style="left:911px;top:333px;width:8px;height:8px;background:rgba(40,140,190,0.15);"></div>
<div class="a" style="left:951px;top:333px;width:8px;height:8px;background:rgba(60,60,150,0.22);"></div>
<div class="a" style="left:975px;top:333px;width:8px;height:8px;background:rgba(60,60,150,0.22);"></div>
<div class="a" style="left:1079px;top:333px;width:8px;height:8px;background:rgba(40,140,190,0.15);"></div>
<div class="a" style="left:1111px;top:333px;width:8px;height:8px;background:rgba(60,60,150,0.22);"></div>
<div class="a" style="left:1127px;top:333px;width:8px;height:8px;background:rgba(40,140,190,0.15);"></div>
<div class="a" style="left:1231px;top:333px;width:8px;height:8px;background:rgba(40,140,190,0.15);"></div>
<div class="a" style="left:879px;top:341px;width:8px;height:8px;background:rgba(60,60,150,0.22);"></div>
<div class="a" style="left:887px;top:341px;width:8px;height:8px;background:rgba(60,60,150,0.22);"></div>
<div class="a" style="left:919px;top:341px;width:8px;height:8px;background:rgba(40,140,190,0.15);"></div>
<div class="a" style="left:935px;top:341px;width:8px;height:8px;background:rgba(60,60,150,0.22);"></div>
<div class="a" style="left:943px;top:341px;width:8px;height:8px;background:rgba(60,60,150,0.22);"></div>
<div class="a" style="left:1023px;top:341px;width:8px;height:8px;background:rgba(60,60,150,0.22);"></div>
<div class="a" style="left:1031px;top:341px;width:8px;height:8px;background:rgba(40,140,190,0.15);"></div>
<div class="a" style="left:1167px;top:341px;width:8px;height:8px;background:rgba(60,60,150,0.22);"></div>
<div class="a" style="left:1183px;top:341px;width:8px;height:8px;background:rgba(60,60,150,0.22);"></div>
<div class="a" style="left:1191px;top:341px;width:8px;height:8px;background:rgba(60,60,150,0.22);"></div>
<div class="a" style="left:1239px;top:341px;width:8px;height:8px;background:rgba(60,60,150,0.22);"></div>
<div class="a" style="left:783px;top:349px;width:8px;height:8px;background:rgba(60,60,150,0.22);"></div>
<div class="a" style="left:823px;top:349px;width:8px;height:8px;background:rgba(40,140,190,0.15);"></div>
<div class="a" style="left:855px;top:349px;width:8px;height:8px;background:rgba(40,140,190,0.15);"></div>
<div class="a" style="left:1087px;top:349px;width:8px;height:8px;background:rgba(60,60,150,0.22);"></div>
<div class="a" style="left:1143px;top:349px;width:8px;height:8px;background:rgba(60,60,150,0.22);"></div>
<div class="a" style="left:1167px;top:349px;width:8px;height:8px;background:rgba(60,60,150,0.22);"></div>
<div class="a" style="left:1175px;top:349px;width:8px;height:8px;background:rgba(60,60,150,0.22);"></div>
<div class="a" style="left:1199px;top:349px;width:8px;height:8px;background:rgba(60,60,150,0.22);"></div>
<div class="a" style="left:1215px;top:349px;width:8px;height:8px;background:rgba(40,140,190,0.15);"></div>
<div class="a" style="left:983px;top:357px;width:8px;height:3px;background:rgba(40,140,190,0.15);"></div>
<div class="a" style="left:1055px;top:357px;width:8px;height:3px;background:rgba(60,60,150,0.22);"></div>
<div class="a" style="left:1071px;top:357px;width:8px;height:3px;background:rgba(40,140,190,0.15);"></div>
<div class="a" style="left:1103px;top:357px;width:8px;height:3px;background:rgba(60,60,150,0.22);"></div>
<div class="a" style="left:1135px;top:357px;width:8px;height:3px;background:rgba(60,60,150,0.22);"></div>
<div class="a" style="left:1143px;top:357px;width:8px;height:3px;background:rgba(40,140,190,0.15);"></div>
<div class="a" style="left:976px;top:261px;width:10px;height:80px;background:rgba(70,60,140,0.28);"></div>
<div class="a" style="left:1180px;top:261px;width:9px;height:85px;background:rgba(70,60,140,0.28);"></div>
<div class="a" style="left:1130px;top:280px;width:9px;height:50px;background:rgba(70,60,140,0.28);"></div>
<div class="a" style="left:1212px;top:261px;width:9px;height:70px;background:rgba(70,60,140,0.28);"></div>
<div class="a" style="left:936px;top:280px;width:9px;height:70px;background:rgba(70,60,140,0.28);"></div>
<div class="a" style="left:897px;top:300px;width:8px;height:40px;background:rgba(70,60,140,0.28);"></div>
<div class="a" style="left:866px;top:290px;width:6px;height:60px;background:rgba(70,60,140,0.28);"></div>
<div class="a" style="left:800px;top:340px;width:10px;height:25px;background:rgba(70,60,140,0.28);"></div>
<div class="a" style="left:940px;top:338px;width:160px;height:3px;background:rgba(70,60,140,0.28);"></div>
<div class="a" style="left:960px;top:353px;width:40px;height:4px;background:rgba(70,60,140,0.28);"></div>
<div class="a" style="left:1080px;top:338px;width:24px;height:6px;background:rgba(70,60,140,0.28);"></div>
<div class="a" style="left:1240px;top:300px;width:8px;height:50px;background:rgba(70,60,140,0.28);"></div>
<div class="a" style="left:1040px;top:290px;width:8px;height:40px;background:rgba(70,60,140,0.28);"></div>
<div class="a" style="left:1160px;top:355px;width:40px;height:5px;background:rgba(70,60,140,0.28);"></div>
<div class="a" style="left:820px;top:350px;width:30px;height:6px;background:rgba(70,60,140,0.28);"></div>
<div class="a" style="left:1095px;top:270px;width:8px;height:30px;background:rgba(70,60,140,0.28);"></div>
<div class="a" style="left:783px;top:360px;width:24px;height:5px;background:rgba(9,91,177,0.78);"></div>
<div class="a" style="left:783px;top:365px;width:24px;height:5px;background:rgba(9,91,177,0.78);"></div>
<div class="a" style="left:783px;top:370px;width:24px;height:4px;background:rgba(9,91,177,0.78);"></div>
<div class="a" style="left:783px;top:374px;width:24px;height:5px;background:rgba(29,35,111,0.78);"></div>
<div class="a" style="left:783px;top:379px;width:24px;height:5px;background:rgba(29,35,111,0.78);"></div>
<div class="a" style="left:783px;top:384px;width:24px;height:4px;background:rgba(136,136,216,0.26);"></div>
<div class="a" style="left:783px;top:388px;width:24px;height:5px;background:rgba(136,136,216,0.26);"></div>
<div class="a" style="left:783px;top:393px;width:24px;height:4px;background:rgba(29,35,111,0.78);"></div>
<div class="a" style="left:783px;top:397px;width:24px;height:5px;background:rgba(0,100,230,0.40);"></div>
<div class="a" style="left:783px;top:402px;width:24px;height:4px;background:rgba(136,136,216,0.26);"></div>
<div class="a" style="left:783px;top:406px;width:24px;height:5px;background:rgba(29,33,68,0.72);"></div>
<div class="a" style="left:783px;top:411px;width:24px;height:5px;background:rgba(9,91,177,0.78);"></div>
<div class="a" style="left:783px;top:416px;width:24px;height:4px;background:rgba(9,91,177,0.78);"></div>
<div class="a" style="left:783px;top:420px;width:24px;height:5px;background:rgba(29,33,68,0.72);"></div>
<div class="a" style="left:783px;top:425px;width:24px;height:5px;background:rgba(0,100,230,0.40);"></div>
<div class="a" style="left:783px;top:430px;width:24px;height:4px;background:rgba(136,136,216,0.26);"></div>
<div class="a" style="left:783px;top:434px;width:24px;height:5px;background:rgba(29,33,68,0.72);"></div>
<div class="a" style="left:783px;top:439px;width:24px;height:4px;background:rgba(29,33,68,0.72);"></div>
<div class="a" style="left:807px;top:360px;width:24px;height:5px;background:rgba(9,91,177,0.78);"></div>
<div class="a" style="left:807px;top:365px;width:24px;height:5px;background:rgba(29,35,111,0.78);"></div>
<div class="a" style="left:807px;top:370px;width:24px;height:4px;background:rgba(0,100,230,0.40);"></div>
<div class="a" style="left:807px;top:374px;width:24px;height:5px;background:rgba(9,91,177,0.78);"></div>
<div class="a" style="left:807px;top:379px;width:24px;height:5px;background:rgba(29,35,111,0.78);"></div>
<div class="a" style="left:807px;top:384px;width:24px;height:4px;background:rgba(9,91,177,0.78);"></div>
<div class="a" style="left:807px;top:388px;width:24px;height:5px;background:rgba(29,35,111,0.78);"></div>
<div class="a" style="left:807px;top:393px;width:24px;height:4px;background:rgba(29,35,111,0.78);"></div>
<div class="a" style="left:807px;top:397px;width:24px;height:5px;background:rgba(0,100,230,0.40);"></div>
<div class="a" style="left:807px;top:402px;width:24px;height:4px;background:rgba(29,33,68,0.72);"></div>
<div class="a" style="left:807px;top:406px;width:24px;height:5px;background:rgba(29,33,68,0.72);"></div>
<div class="a" style="left:807px;top:411px;width:24px;height:5px;background:rgba(0,100,230,0.40);"></div>
<div class="a" style="left:807px;top:416px;width:24px;height:4px;background:rgba(0,100,230,0.40);"></div>
<div class="a" style="left:807px;top:420px;width:24px;height:5px;background:rgba(29,33,68,0.72);"></div>
<div class="a" style="left:807px;top:425px;width:24px;height:5px;background:rgba(29,33,68,0.72);"></div>
<div class="a" style="left:807px;top:430px;width:24px;height:4px;background:rgba(136,136,216,0.26);"></div>
<div class="a" style="left:807px;top:434px;width:24px;height:5px;background:rgba(136,136,216,0.26);"></div>
<div class="a" style="left:807px;top:439px;width:24px;height:4px;background:rgba(0,100,230,0.40);"></div>
<div class="a" style="left:807px;top:443px;width:24px;height:5px;background:rgba(29,33,68,0.72);"></div>
<div class="a" style="left:807px;top:448px;width:24px;height:4px;background:rgba(29,33,68,0.72);"></div>
<div class="a" style="left:831px;top:360px;width:24px;height:5px;background:rgba(29,35,111,0.78);"></div>
<div class="a" style="left:831px;top:365px;width:24px;height:5px;background:rgba(9,91,177,0.78);"></div>
<div class="a" style="left:831px;top:370px;width:24px;height:4px;background:rgba(9,91,177,0.78);"></div>
<div class="a" style="left:831px;top:374px;width:24px;height:5px;background:rgba(29,35,111,0.78);"></div>
<div class="a" style="left:831px;top:379px;width:24px;height:5px;background:rgba(9,91,177,0.78);"></div>
<div class="a" style="left:831px;top:384px;width:24px;height:4px;background:rgba(9,91,177,0.78);"></div>
<div class="a" style="left:831px;top:388px;width:24px;height:5px;background:rgba(29,35,111,0.78);"></div>
<div class="a" style="left:831px;top:393px;width:24px;height:4px;background:rgba(136,136,216,0.26);"></div>
<div class="a" style="left:831px;top:397px;width:24px;height:5px;background:rgba(136,136,216,0.26);"></div>
<div class="a" style="left:831px;top:402px;width:24px;height:4px;background:rgba(29,33,68,0.72);"></div>
<div class="a" style="left:831px;top:406px;width:24px;height:5px;background:rgba(0,100,230,0.40);"></div>
<div class="a" style="left:831px;top:411px;width:24px;height:5px;background:rgba(9,91,177,0.78);"></div>
<div class="a" style="left:831px;top:416px;width:24px;height:4px;background:rgba(29,33,68,0.72);"></div>
<div class="a" style="left:831px;top:420px;width:24px;height:5px;background:rgba(136,136,216,0.26);"></div>
<div class="a" style="left:831px;top:425px;width:24px;height:5px;background:rgba(0,100,230,0.40);"></div>
<div class="a" style="left:831px;top:430px;width:24px;height:4px;background:rgba(29,33,68,0.72);"></div>
<div class="a" style="left:831px;top:434px;width:24px;height:5px;background:rgba(29,33,68,0.72);"></div>
<div class="a" style="left:831px;top:439px;width:24px;height:4px;background:rgba(29,33,68,0.72);"></div>
<div class="a" style="left:831px;top:443px;width:24px;height:5px;background:rgba(136,136,216,0.26);"></div>
<div class="a" style="left:831px;top:448px;width:24px;height:4px;background:rgba(29,33,68,0.72);"></div>
<div class="a" style="left:855px;top:360px;width:24px;height:5px;background:rgba(9,91,177,0.78);"></div>
<div class="a" style="left:855px;top:365px;width:24px;height:5px;background:rgba(9,91,177,0.78);"></div>
<div class="a" style="left:855px;top:370px;width:24px;height:4px;background:rgba(9,91,177,0.78);"></div>
<div class="a" style="left:855px;top:374px;width:24px;height:5px;background:rgba(29,35,111,0.78);"></div>
<div class="a" style="left:855px;top:379px;width:24px;height:5px;background:rgba(29,35,111,0.78);"></div>
<div class="a" style="left:855px;top:384px;width:24px;height:4px;background:rgba(136,136,216,0.26);"></div>
<div class="a" style="left:855px;top:388px;width:24px;height:5px;background:rgba(0,100,230,0.40);"></div>
<div class="a" style="left:855px;top:393px;width:24px;height:4px;background:rgba(9,91,177,0.78);"></div>
<div class="a" style="left:855px;top:397px;width:24px;height:5px;background:rgba(9,91,177,0.78);"></div>
<div class="a" style="left:855px;top:402px;width:24px;height:4px;background:rgba(29,33,68,0.72);"></div>
<div class="a" style="left:855px;top:406px;width:24px;height:5px;background:rgba(9,91,177,0.78);"></div>
<div class="a" style="left:855px;top:411px;width:24px;height:5px;background:rgba(136,136,216,0.26);"></div>
<div class="a" style="left:855px;top:416px;width:24px;height:4px;background:rgba(0,100,230,0.40);"></div>
<div class="a" style="left:855px;top:420px;width:24px;height:5px;background:rgba(29,33,68,0.72);"></div>
<div class="a" style="left:855px;top:425px;width:24px;height:5px;background:rgba(136,136,216,0.26);"></div>
<div class="a" style="left:855px;top:434px;width:24px;height:5px;background:rgba(0,100,230,0.40);"></div>
<div class="a" style="left:855px;top:448px;width:24px;height:4px;background:rgba(29,33,68,0.72);"></div>
<div class="a" style="left:855px;top:452px;width:24px;height:5px;background:rgba(29,33,68,0.72);"></div>
<div class="a" style="left:879px;top:360px;width:24px;height:5px;background:rgba(9,91,177,0.78);"></div>
<div class="a" style="left:879px;top:365px;width:24px;height:5px;background:rgba(9,91,177,0.78);"></div>
<div class="a" style="left:879px;top:370px;width:24px;height:4px;background:rgba(9,91,177,0.78);"></div>
<div class="a" style="left:879px;top:374px;width:24px;height:5px;background:rgba(9,91,177,0.78);"></div>
<div class="a" style="left:879px;top:379px;width:24px;height:5px;background:rgba(136,136,216,0.26);"></div>
<div class="a" style="left:879px;top:384px;width:24px;height:4px;background:rgba(29,35,111,0.78);"></div>
<div class="a" style="left:879px;top:388px;width:24px;height:5px;background:rgba(9,91,177,0.78);"></div>
<div class="a" style="left:879px;top:393px;width:24px;height:4px;background:rgba(9,91,177,0.78);"></div>
<div class="a" style="left:879px;top:397px;width:24px;height:5px;background:rgba(29,33,68,0.72);"></div>
<div class="a" style="left:879px;top:402px;width:24px;height:4px;background:rgba(9,91,177,0.78);"></div>
<div class="a" style="left:879px;top:406px;width:24px;height:5px;background:rgba(9,91,177,0.78);"></div>
<div class="a" style="left:879px;top:411px;width:24px;height:5px;background:rgba(9,91,177,0.78);"></div>
<div class="a" style="left:879px;top:416px;width:24px;height:4px;background:rgba(29,33,68,0.72);"></div>
<div class="a" style="left:879px;top:420px;width:24px;height:5px;background:rgba(136,136,216,0.26);"></div>
<div class="a" style="left:879px;top:425px;width:24px;height:5px;background:rgba(29,33,68,0.72);"></div>
<div class="a" style="left:879px;top:430px;width:24px;height:4px;background:rgba(29,33,68,0.72);"></div>
<div class="a" style="left:879px;top:434px;width:24px;height:5px;background:rgba(0,100,230,0.40);"></div>
<div class="a" style="left:879px;top:439px;width:24px;height:4px;background:rgba(0,100,230,0.40);"></div>
<div class="a" style="left:879px;top:452px;width:24px;height:5px;background:rgba(29,33,68,0.72);"></div>
<div class="a" style="left:879px;top:457px;width:24px;height:5px;background:rgba(29,33,68,0.72);"></div>
<div class="a" style="left:903px;top:360px;width:24px;height:5px;background:rgba(9,91,177,0.78);"></div>
<div class="a" style="left:903px;top:365px;width:24px;height:5px;background:rgba(9,91,177,0.78);"></div>
<div class="a" style="left:903px;top:370px;width:24px;height:4px;background:rgba(29,35,111,0.78);"></div>
<div class="a" style="left:903px;top:374px;width:24px;height:5px;background:rgba(9,91,177,0.78);"></div>
<div class="a" style="left:903px;top:379px;width:24px;height:5px;background:rgba(29,35,111,0.78);"></div>
<div class="a" style="left:903px;top:384px;width:24px;height:4px;background:rgba(9,91,177,0.78);"></div>
<div class="a" style="left:903px;top:388px;width:24px;height:5px;background:rgba(9,91,177,0.78);"></div>
<div class="a" style="left:903px;top:393px;width:24px;height:4px;background:rgba(29,35,111,0.78);"></div>
<div class="a" style="left:903px;top:397px;width:24px;height:5px;background:rgba(0,100,230,0.40);"></div>
<div class="a" style="left:903px;top:402px;width:24px;height:4px;background:rgba(136,136,216,0.26);"></div>
<div class="a" style="left:903px;top:406px;width:24px;height:5px;background:rgba(9,91,177,0.78);"></div>
<div class="a" style="left:903px;top:411px;width:24px;height:5px;background:rgba(9,91,177,0.78);"></div>
<div class="a" style="left:903px;top:416px;width:24px;height:4px;background:rgba(136,136,216,0.26);"></div>
<div class="a" style="left:903px;top:420px;width:24px;height:5px;background:rgba(0,100,230,0.40);"></div>
<div class="a" style="left:903px;top:425px;width:24px;height:5px;background:rgba(136,136,216,0.26);"></div>
<div class="a" style="left:903px;top:430px;width:24px;height:4px;background:rgba(136,136,216,0.26);"></div>
<div class="a" style="left:903px;top:434px;width:24px;height:5px;background:rgba(9,91,177,0.78);"></div>
<div class="a" style="left:903px;top:439px;width:24px;height:4px;background:rgba(136,136,216,0.26);"></div>
<div class="a" style="left:903px;top:443px;width:24px;height:5px;background:rgba(29,33,68,0.72);"></div>
<div class="a" style="left:903px;top:448px;width:24px;height:4px;background:rgba(29,33,68,0.72);"></div>
<div class="a" style="left:903px;top:452px;width:24px;height:5px;background:rgba(136,136,216,0.26);"></div>
<div class="a" style="left:903px;top:457px;width:24px;height:5px;background:rgba(29,33,68,0.72);"></div>
<div class="a" style="left:927px;top:360px;width:24px;height:5px;background:rgba(9,91,177,0.78);"></div>
<div class="a" style="left:927px;top:365px;width:24px;height:5px;background:rgba(29,35,111,0.78);"></div>
<div class="a" style="left:927px;top:370px;width:24px;height:4px;background:rgba(9,91,177,0.78);"></div>
<div class="a" style="left:927px;top:374px;width:24px;height:5px;background:rgba(9,91,177,0.78);"></div>
<div class="a" style="left:927px;top:379px;width:24px;height:5px;background:rgba(29,35,111,0.78);"></div>
<div class="a" style="left:927px;top:384px;width:24px;height:4px;background:rgba(136,136,216,0.26);"></div>
<div class="a" style="left:927px;top:388px;width:24px;height:5px;background:rgba(9,91,177,0.78);"></div>
<div class="a" style="left:927px;top:393px;width:24px;height:4px;background:rgba(29,35,111,0.78);"></div>
<div class="a" style="left:927px;top:397px;width:24px;height:5px;background:rgba(9,91,177,0.78);"></div>
<div class="a" style="left:927px;top:402px;width:24px;height:4px;background:rgba(0,100,230,0.40);"></div>
<div class="a" style="left:927px;top:406px;width:24px;height:5px;background:rgba(0,100,230,0.40);"></div>
<div class="a" style="left:927px;top:411px;width:24px;height:5px;background:rgba(0,100,230,0.40);"></div>
<div class="a" style="left:927px;top:416px;width:24px;height:4px;background:rgba(136,136,216,0.26);"></div>
<div class="a" style="left:927px;top:420px;width:24px;height:5px;background:rgba(0,100,230,0.40);"></div>
<div class="a" style="left:927px;top:425px;width:24px;height:5px;background:rgba(29,33,68,0.72);"></div>
<div class="a" style="left:927px;top:430px;width:24px;height:4px;background:rgba(29,33,68,0.72);"></div>
<div class="a" style="left:927px;top:443px;width:24px;height:5px;background:rgba(0,100,230,0.40);"></div>
<div class="a" style="left:951px;top:360px;width:24px;height:5px;background:rgba(9,91,177,0.78);"></div>
<div class="a" style="left:951px;top:365px;width:24px;height:5px;background:rgba(9,91,177,0.78);"></div>
<div class="a" style="left:951px;top:370px;width:24px;height:4px;background:rgba(9,91,177,0.78);"></div>
<div class="a" style="left:951px;top:374px;width:24px;height:5px;background:rgba(9,91,177,0.78);"></div>
<div class="a" style="left:951px;top:379px;width:24px;height:5px;background:rgba(29,35,111,0.78);"></div>
<div class="a" style="left:951px;top:384px;width:24px;height:4px;background:rgba(9,91,177,0.78);"></div>
<div class="a" style="left:951px;top:388px;width:24px;height:5px;background:rgba(136,136,216,0.26);"></div>
<div class="a" style="left:951px;top:393px;width:24px;height:4px;background:rgba(0,100,230,0.40);"></div>
<div class="a" style="left:951px;top:397px;width:24px;height:5px;background:rgba(9,91,177,0.78);"></div>
<div class="a" style="left:951px;top:402px;width:24px;height:4px;background:rgba(29,33,68,0.72);"></div>
<div class="a" style="left:951px;top:406px;width:24px;height:5px;background:rgba(0,100,230,0.40);"></div>
<div class="a" style="left:951px;top:411px;width:24px;height:5px;background:rgba(29,33,68,0.72);"></div>
<div class="a" style="left:951px;top:416px;width:24px;height:4px;background:rgba(29,33,68,0.72);"></div>
<div class="a" style="left:951px;top:420px;width:24px;height:5px;background:rgba(136,136,216,0.26);"></div>
<div class="a" style="left:951px;top:425px;width:24px;height:5px;background:rgba(29,33,68,0.72);"></div>
<div class="a" style="left:951px;top:430px;width:24px;height:4px;background:rgba(136,136,216,0.26);"></div>
<div class="a" style="left:951px;top:434px;width:24px;height:5px;background:rgba(29,33,68,0.72);"></div>
<div class="a" style="left:951px;top:448px;width:24px;height:4px;background:rgba(29,33,68,0.72);"></div>
<div class="a" style="left:951px;top:452px;width:24px;height:5px;background:rgba(29,33,68,0.72);"></div>
<div class="a" style="left:975px;top:360px;width:24px;height:5px;background:rgba(9,91,177,0.78);"></div>
<div class="a" style="left:975px;top:365px;width:24px;height:5px;background:rgba(9,91,177,0.78);"></div>
<div class="a" style="left:975px;top:370px;width:24px;height:4px;background:rgba(29,35,111,0.78);"></div>
<div class="a" style="left:975px;top:374px;width:24px;height:5px;background:rgba(29,35,111,0.78);"></div>
<div class="a" style="left:975px;top:379px;width:24px;height:5px;background:rgba(9,91,177,0.78);"></div>
<div class="a" style="left:975px;top:384px;width:24px;height:4px;background:rgba(9,91,177,0.78);"></div>
<div class="a" style="left:975px;top:388px;width:24px;height:5px;background:rgba(9,91,177,0.78);"></div>
<div class="a" style="left:975px;top:393px;width:24px;height:4px;background:rgba(0,100,230,0.40);"></div>
<div class="a" style="left:975px;top:397px;width:24px;height:5px;background:rgba(9,91,177,0.78);"></div>
<div class="a" style="left:975px;top:402px;width:24px;height:4px;background:rgba(9,91,177,0.78);"></div>
<div class="a" style="left:975px;top:406px;width:24px;height:5px;background:rgba(9,91,177,0.78);"></div>
<div class="a" style="left:975px;top:411px;width:24px;height:5px;background:rgba(29,33,68,0.72);"></div>
<div class="a" style="left:975px;top:416px;width:24px;height:4px;background:rgba(29,33,68,0.72);"></div>
<div class="a" style="left:975px;top:420px;width:24px;height:5px;background:rgba(0,100,230,0.40);"></div>
<div class="a" style="left:975px;top:425px;width:24px;height:5px;background:rgba(0,100,230,0.40);"></div>
<div class="a" style="left:975px;top:430px;width:24px;height:4px;background:rgba(136,136,216,0.26);"></div>
<div class="a" style="left:975px;top:434px;width:24px;height:5px;background:rgba(0,100,230,0.40);"></div>
<div class="a" style="left:975px;top:439px;width:24px;height:4px;background:rgba(0,100,230,0.40);"></div>
<div class="a" style="left:975px;top:443px;width:24px;height:5px;background:rgba(29,33,68,0.72);"></div>
<div class="a" style="left:975px;top:448px;width:24px;height:4px;background:rgba(29,33,68,0.72);"></div>
<div class="a" style="left:975px;top:452px;width:24px;height:5px;background:rgba(136,136,216,0.26);"></div>
<div class="a" style="left:975px;top:457px;width:24px;height:5px;background:rgba(29,33,68,0.72);"></div>
<div class="a" style="left:999px;top:360px;width:24px;height:5px;background:rgba(29,35,111,0.78);"></div>
<div class="a" style="left:999px;top:365px;width:24px;height:5px;background:rgba(9,91,177,0.78);"></div>
<div class="a" style="left:999px;top:370px;width:24px;height:4px;background:rgba(29,35,111,0.78);"></div>
<div class="a" style="left:999px;top:374px;width:24px;height:5px;background:rgba(9,91,177,0.78);"></div>
<div class="a" style="left:999px;top:379px;width:24px;height:5px;background:rgba(9,91,177,0.78);"></div>
<div class="a" style="left:999px;top:384px;width:24px;height:4px;background:rgba(9,91,177,0.78);"></div>
<div class="a" style="left:999px;top:388px;width:24px;height:5px;background:rgba(136,136,216,0.26);"></div>
<div class="a" style="left:999px;top:393px;width:24px;height:4px;background:rgba(29,35,111,0.78);"></div>
<div class="a" style="left:999px;top:397px;width:24px;height:5px;background:rgba(9,91,177,0.78);"></div>
<div class="a" style="left:999px;top:402px;width:24px;height:4px;background:rgba(136,136,216,0.26);"></div>
<div class="a" style="left:999px;top:406px;width:24px;height:5px;background:rgba(29,33,68,0.72);"></div>
<div class="a" style="left:999px;top:411px;width:24px;height:5px;background:rgba(9,91,177,0.78);"></div>
<div class="a" style="left:999px;top:416px;width:24px;height:4px;background:rgba(136,136,216,0.26);"></div>
<div class="a" style="left:999px;top:420px;width:24px;height:5px;background:rgba(136,136,216,0.26);"></div>
<div class="a" style="left:999px;top:425px;width:24px;height:5px;background:rgba(29,33,68,0.72);"></div>
<div class="a" style="left:999px;top:430px;width:24px;height:4px;background:rgba(29,33,68,0.72);"></div>
<div class="a" style="left:999px;top:434px;width:24px;height:5px;background:rgba(0,100,230,0.40);"></div>
<div class="a" style="left:999px;top:439px;width:24px;height:4px;background:rgba(29,33,68,0.72);"></div>
<div class="a" style="left:999px;top:443px;width:24px;height:5px;background:rgba(9,91,177,0.78);"></div>
<div class="a" style="left:999px;top:448px;width:24px;height:4px;background:rgba(0,100,230,0.40);"></div>
<div class="a" style="left:999px;top:452px;width:24px;height:5px;background:rgba(29,33,68,0.72);"></div>
<div class="a" style="left:999px;top:457px;width:24px;height:5px;background:rgba(29,33,68,0.72);"></div>
<div class="a" style="left:1023px;top:360px;width:24px;height:5px;background:rgba(29,35,111,0.78);"></div>
<div class="a" style="left:1023px;top:365px;width:24px;height:5px;background:rgba(29,35,111,0.78);"></div>
<div class="a" style="left:1023px;top:370px;width:24px;height:4px;background:rgba(9,91,177,0.78);"></div>
<div class="a" style="left:1023px;top:374px;width:24px;height:5px;background:rgba(9,91,177,0.78);"></div>
<div class="a" style="left:1023px;top:379px;width:24px;height:5px;background:rgba(9,91,177,0.78);"></div>
<div class="a" style="left:1023px;top:384px;width:24px;height:4px;background:rgba(29,35,111,0.78);"></div>
<div class="a" style="left:1023px;top:388px;width:24px;height:5px;background:rgba(136,136,216,0.26);"></div>
<div class="a" style="left:1023px;top:393px;width:24px;height:4px;background:rgba(0,100,230,0.40);"></div>
<div class="a" style="left:1023px;top:397px;width:24px;height:5px;background:rgba(136,136,216,0.26);"></div>
<div class="a" style="left:1023px;top:402px;width:24px;height:4px;background:rgba(29,33,68,0.72);"></div>
<div class="a" style="left:1023px;top:406px;width:24px;height:5px;background:rgba(136,136,216,0.26);"></div>
<div class="a" style="left:1023px;top:411px;width:24px;height:5px;background:rgba(9,91,177,0.78);"></div>
<div class="a" style="left:1023px;top:416px;width:24px;height:4px;background:rgba(0,100,230,0.40);"></div>
<div class="a" style="left:1023px;top:420px;width:24px;height:5px;background:rgba(9,91,177,0.78);"></div>
<div class="a" style="left:1023px;top:425px;width:24px;height:5px;background:rgba(0,100,230,0.40);"></div>
<div class="a" style="left:1023px;top:430px;width:24px;height:4px;background:rgba(136,136,216,0.26);"></div>
<div class="a" style="left:1023px;top:434px;width:24px;height:5px;background:rgba(29,33,68,0.72);"></div>
<div class="a" style="left:1023px;top:439px;width:24px;height:4px;background:rgba(29,33,68,0.72);"></div>
<div class="a" style="left:1023px;top:443px;width:24px;height:5px;background:rgba(29,33,68,0.72);"></div>
<div class="a" style="left:1023px;top:452px;width:24px;height:5px;background:rgba(29,33,68,0.72);"></div>
<div class="a" style="left:1047px;top:360px;width:24px;height:5px;background:rgba(29,35,111,0.78);"></div>
<div class="a" style="left:1047px;top:365px;width:24px;height:5px;background:rgba(9,91,177,0.78);"></div>
<div class="a" style="left:1047px;top:370px;width:24px;height:4px;background:rgba(29,35,111,0.78);"></div>
<div class="a" style="left:1047px;top:374px;width:24px;height:5px;background:rgba(29,35,111,0.78);"></div>
<div class="a" style="left:1047px;top:379px;width:24px;height:5px;background:rgba(136,136,216,0.26);"></div>
<div class="a" style="left:1047px;top:384px;width:24px;height:4px;background:rgba(29,35,111,0.78);"></div>
<div class="a" style="left:1047px;top:388px;width:24px;height:5px;background:rgba(29,35,111,0.78);"></div>
<div class="a" style="left:1047px;top:393px;width:24px;height:4px;background:rgba(9,91,177,0.78);"></div>
<div class="a" style="left:1047px;top:397px;width:24px;height:5px;background:rgba(29,33,68,0.72);"></div>
<div class="a" style="left:1047px;top:402px;width:24px;height:4px;background:rgba(29,33,68,0.72);"></div>
<div class="a" style="left:1047px;top:406px;width:24px;height:5px;background:rgba(9,91,177,0.78);"></div>
<div class="a" style="left:1047px;top:411px;width:24px;height:5px;background:rgba(9,91,177,0.78);"></div>
<div class="a" style="left:1047px;top:416px;width:24px;height:4px;background:rgba(0,100,230,0.40);"></div>
<div class="a" style="left:1047px;top:420px;width:24px;height:5px;background:rgba(136,136,216,0.26);"></div>
<div class="a" style="left:1047px;top:425px;width:24px;height:5px;background:rgba(136,136,216,0.26);"></div>
<div class="a" style="left:1047px;top:430px;width:24px;height:4px;background:rgba(136,136,216,0.26);"></div>
<div class="a" style="left:1047px;top:434px;width:24px;height:5px;background:rgba(29,33,68,0.72);"></div>
<div class="a" style="left:1047px;top:443px;width:24px;height:5px;background:rgba(0,100,230,0.40);"></div>
<div class="a" style="left:1071px;top:360px;width:24px;height:5px;background:rgba(9,91,177,0.78);"></div>
<div class="a" style="left:1071px;top:365px;width:24px;height:5px;background:rgba(9,91,177,0.78);"></div>
<div class="a" style="left:1071px;top:370px;width:24px;height:4px;background:rgba(29,35,111,0.78);"></div>
<div class="a" style="left:1071px;top:374px;width:24px;height:5px;background:rgba(9,91,177,0.78);"></div>
<div class="a" style="left:1071px;top:379px;width:24px;height:5px;background:rgba(9,91,177,0.78);"></div>
<div class="a" style="left:1071px;top:384px;width:24px;height:4px;background:rgba(9,91,177,0.78);"></div>
<div class="a" style="left:1071px;top:388px;width:24px;height:5px;background:rgba(9,91,177,0.78);"></div>
<div class="a" style="left:1071px;top:393px;width:24px;height:4px;background:rgba(0,100,230,0.40);"></div>
<div class="a" style="left:1071px;top:397px;width:24px;height:5px;background:rgba(9,91,177,0.78);"></div>
<div class="a" style="left:1071px;top:402px;width:24px;height:4px;background:rgba(136,136,216,0.26);"></div>
<div class="a" style="left:1071px;top:406px;width:24px;height:5px;background:rgba(29,33,68,0.72);"></div>
<div class="a" style="left:1071px;top:411px;width:24px;height:5px;background:rgba(136,136,216,0.26);"></div>
<div class="a" style="left:1071px;top:416px;width:24px;height:4px;background:rgba(0,100,230,0.40);"></div>
<div class="a" style="left:1071px;top:420px;width:24px;height:5px;background:rgba(9,91,177,0.78);"></div>
<div class="a" style="left:1071px;top:425px;width:24px;height:5px;background:rgba(136,136,216,0.26);"></div>
<div class="a" style="left:1071px;top:430px;width:24px;height:4px;background:rgba(0,100,230,0.40);"></div>
<div class="a" style="left:1071px;top:434px;width:24px;height:5px;background:rgba(0,100,230,0.40);"></div>
<div class="a" style="left:1071px;top:452px;width:24px;height:5px;background:rgba(29,33,68,0.72);"></div>
<div class="a" style="left:1071px;top:462px;width:24px;height:4px;background:rgba(29,33,68,0.72);"></div>
<div class="a" style="left:1095px;top:360px;width:24px;height:5px;background:rgba(29,35,111,0.78);"></div>
<div class="a" style="left:1095px;top:365px;width:24px;height:5px;background:rgba(29,35,111,0.78);"></div>
<div class="a" style="left:1095px;top:370px;width:24px;height:4px;background:rgba(9,91,177,0.78);"></div>
<div class="a" style="left:1095px;top:374px;width:24px;height:5px;background:rgba(9,91,177,0.78);"></div>
<div class="a" style="left:1095px;top:379px;width:24px;height:5px;background:rgba(9,91,177,0.78);"></div>
<div class="a" style="left:1095px;top:384px;width:24px;height:4px;background:rgba(29,35,111,0.78);"></div>
<div class="a" style="left:1095px;top:388px;width:24px;height:5px;background:rgba(9,91,177,0.78);"></div>
<div class="a" style="left:1095px;top:393px;width:24px;height:4px;background:rgba(9,91,177,0.78);"></div>
<div class="a" style="left:1095px;top:397px;width:24px;height:5px;background:rgba(29,33,68,0.72);"></div>
<div class="a" style="left:1095px;top:402px;width:24px;height:4px;background:rgba(29,33,68,0.72);"></div>
<div class="a" style="left:1095px;top:406px;width:24px;height:5px;background:rgba(29,33,68,0.72);"></div>
<div class="a" style="left:1095px;top:411px;width:24px;height:5px;background:rgba(29,33,68,0.72);"></div>
<div class="a" style="left:1095px;top:416px;width:24px;height:4px;background:rgba(9,91,177,0.78);"></div>
<div class="a" style="left:1095px;top:420px;width:24px;height:5px;background:rgba(9,91,177,0.78);"></div>
<div class="a" style="left:1095px;top:425px;width:24px;height:5px;background:rgba(0,100,230,0.40);"></div>
<div class="a" style="left:1095px;top:430px;width:24px;height:4px;background:rgba(0,100,230,0.40);"></div>
<div class="a" style="left:1095px;top:434px;width:24px;height:5px;background:rgba(29,33,68,0.72);"></div>
<div class="a" style="left:1095px;top:457px;width:24px;height:5px;background:rgba(9,91,177,0.78);"></div>
<div class="a" style="left:1095px;top:462px;width:24px;height:4px;background:rgba(29,33,68,0.72);"></div>
<div class="a" style="left:1119px;top:360px;width:24px;height:5px;background:rgba(29,35,111,0.78);"></div>
<div class="a" style="left:1119px;top:365px;width:24px;height:5px;background:rgba(9,91,177,0.78);"></div>
<div class="a" style="left:1119px;top:370px;width:24px;height:4px;background:rgba(9,91,177,0.78);"></div>
<div class="a" style="left:1119px;top:374px;width:24px;height:5px;background:rgba(136,136,216,0.26);"></div>
<div class="a" style="left:1119px;top:379px;width:24px;height:5px;background:rgba(29,35,111,0.78);"></div>
<div class="a" style="left:1119px;top:384px;width:24px;height:4px;background:rgba(29,35,111,0.78);"></div>
<div class="a" style="left:1119px;top:388px;width:24px;height:5px;background:rgba(29,35,111,0.78);"></div>
<div class="a" style="left:1119px;top:393px;width:24px;height:4px;background:rgba(9,91,177,0.78);"></div>
<div class="a" style="left:1119px;top:397px;width:24px;height:5px;background:rgba(9,91,177,0.78);"></div>
<div class="a" style="left:1119px;top:402px;width:24px;height:4px;background:rgba(136,136,216,0.26);"></div>
<div class="a" style="left:1119px;top:406px;width:24px;height:5px;background:rgba(29,33,68,0.72);"></div>
<div class="a" style="left:1119px;top:411px;width:24px;height:5px;background:rgba(9,91,177,0.78);"></div>
<div class="a" style="left:1119px;top:416px;width:24px;height:4px;background:rgba(29,33,68,0.72);"></div>
<div class="a" style="left:1119px;top:420px;width:24px;height:5px;background:rgba(29,33,68,0.72);"></div>
<div class="a" style="left:1119px;top:425px;width:24px;height:5px;background:rgba(136,136,216,0.26);"></div>
<div class="a" style="left:1119px;top:430px;width:24px;height:4px;background:rgba(29,33,68,0.72);"></div>
<div class="a" style="left:1119px;top:434px;width:24px;height:5px;background:rgba(136,136,216,0.26);"></div>
<div class="a" style="left:1119px;top:439px;width:24px;height:4px;background:rgba(9,91,177,0.78);"></div>
<div class="a" style="left:1119px;top:443px;width:24px;height:5px;background:rgba(29,33,68,0.72);"></div>
<div class="a" style="left:1143px;top:360px;width:24px;height:5px;background:rgba(9,91,177,0.78);"></div>
<div class="a" style="left:1143px;top:365px;width:24px;height:5px;background:rgba(9,91,177,0.78);"></div>
<div class="a" style="left:1143px;top:370px;width:24px;height:4px;background:rgba(0,100,230,0.40);"></div>
<div class="a" style="left:1143px;top:374px;width:24px;height:5px;background:rgba(9,91,177,0.78);"></div>
<div class="a" style="left:1143px;top:379px;width:24px;height:5px;background:rgba(29,35,111,0.78);"></div>
<div class="a" style="left:1143px;top:384px;width:24px;height:4px;background:rgba(9,91,177,0.78);"></div>
<div class="a" style="left:1143px;top:388px;width:24px;height:5px;background:rgba(0,100,230,0.40);"></div>
<div class="a" style="left:1143px;top:393px;width:24px;height:4px;background:rgba(29,35,111,0.78);"></div>
<div class="a" style="left:1143px;top:397px;width:24px;height:5px;background:rgba(29,33,68,0.72);"></div>
<div class="a" style="left:1143px;top:402px;width:24px;height:4px;background:rgba(29,33,68,0.72);"></div>
<div class="a" style="left:1143px;top:406px;width:24px;height:5px;background:rgba(136,136,216,0.26);"></div>
<div class="a" style="left:1143px;top:411px;width:24px;height:5px;background:rgba(9,91,177,0.78);"></div>
<div class="a" style="left:1143px;top:416px;width:24px;height:4px;background:rgba(29,33,68,0.72);"></div>
<div class="a" style="left:1143px;top:420px;width:24px;height:5px;background:rgba(136,136,216,0.26);"></div>
<div class="a" style="left:1143px;top:425px;width:24px;height:5px;background:rgba(0,100,230,0.40);"></div>
<div class="a" style="left:1143px;top:430px;width:24px;height:4px;background:rgba(136,136,216,0.26);"></div>
<div class="a" style="left:1143px;top:434px;width:24px;height:5px;background:rgba(29,33,68,0.72);"></div>
<div class="a" style="left:1143px;top:439px;width:24px;height:4px;background:rgba(136,136,216,0.26);"></div>
<div class="a" style="left:1143px;top:443px;width:24px;height:5px;background:rgba(29,33,68,0.72);"></div>
<div class="a" style="left:1143px;top:448px;width:24px;height:4px;background:rgba(29,33,68,0.72);"></div>
<div class="a" style="left:1143px;top:452px;width:24px;height:5px;background:rgba(0,100,230,0.40);"></div>
<div class="a" style="left:1167px;top:360px;width:24px;height:5px;background:rgba(9,91,177,0.78);"></div>
<div class="a" style="left:1167px;top:365px;width:24px;height:5px;background:rgba(9,91,177,0.78);"></div>
<div class="a" style="left:1167px;top:370px;width:24px;height:4px;background:rgba(29,35,111,0.78);"></div>
<div class="a" style="left:1167px;top:374px;width:24px;height:5px;background:rgba(29,35,111,0.78);"></div>
<div class="a" style="left:1167px;top:379px;width:24px;height:5px;background:rgba(9,91,177,0.78);"></div>
<div class="a" style="left:1167px;top:384px;width:24px;height:4px;background:rgba(9,91,177,0.78);"></div>
<div class="a" style="left:1167px;top:388px;width:24px;height:5px;background:rgba(9,91,177,0.78);"></div>
<div class="a" style="left:1167px;top:393px;width:24px;height:4px;background:rgba(9,91,177,0.78);"></div>
<div class="a" style="left:1167px;top:397px;width:24px;height:5px;background:rgba(9,91,177,0.78);"></div>
<div class="a" style="left:1167px;top:402px;width:24px;height:4px;background:rgba(9,91,177,0.78);"></div>
<div class="a" style="left:1167px;top:406px;width:24px;height:5px;background:rgba(136,136,216,0.26);"></div>
<div class="a" style="left:1167px;top:411px;width:24px;height:5px;background:rgba(29,33,68,0.72);"></div>
<div class="a" style="left:1167px;top:416px;width:24px;height:4px;background:rgba(29,33,68,0.72);"></div>
<div class="a" style="left:1167px;top:420px;width:24px;height:5px;background:rgba(136,136,216,0.26);"></div>
<div class="a" style="left:1167px;top:425px;width:24px;height:5px;background:rgba(9,91,177,0.78);"></div>
<div class="a" style="left:1167px;top:430px;width:24px;height:4px;background:rgba(9,91,177,0.78);"></div>
<div class="a" style="left:1167px;top:434px;width:24px;height:5px;background:rgba(9,91,177,0.78);"></div>
<div class="a" style="left:1167px;top:439px;width:24px;height:4px;background:rgba(136,136,216,0.26);"></div>
<div class="a" style="left:1167px;top:443px;width:24px;height:5px;background:rgba(29,33,68,0.72);"></div>
<div class="a" style="left:1191px;top:360px;width:24px;height:5px;background:rgba(9,91,177,0.78);"></div>
<div class="a" style="left:1191px;top:365px;width:24px;height:5px;background:rgba(29,35,111,0.78);"></div>
<div class="a" style="left:1191px;top:370px;width:24px;height:4px;background:rgba(9,91,177,0.78);"></div>
<div class="a" style="left:1191px;top:374px;width:24px;height:5px;background:rgba(9,91,177,0.78);"></div>
<div class="a" style="left:1191px;top:379px;width:24px;height:5px;background:rgba(9,91,177,0.78);"></div>
<div class="a" style="left:1191px;top:384px;width:24px;height:4px;background:rgba(29,35,111,0.78);"></div>
<div class="a" style="left:1191px;top:388px;width:24px;height:5px;background:rgba(0,100,230,0.40);"></div>
<div class="a" style="left:1191px;top:393px;width:24px;height:4px;background:rgba(29,35,111,0.78);"></div>
<div class="a" style="left:1191px;top:397px;width:24px;height:5px;background:rgba(29,33,68,0.72);"></div>
<div class="a" style="left:1191px;top:402px;width:24px;height:4px;background:rgba(9,91,177,0.78);"></div>
<div class="a" style="left:1191px;top:406px;width:24px;height:5px;background:rgba(29,33,68,0.72);"></div>
<div class="a" style="left:1191px;top:411px;width:24px;height:5px;background:rgba(9,91,177,0.78);"></div>
<div class="a" style="left:1191px;top:416px;width:24px;height:4px;background:rgba(29,33,68,0.72);"></div>
<div class="a" style="left:1191px;top:420px;width:24px;height:5px;background:rgba(0,100,230,0.40);"></div>
<div class="a" style="left:1191px;top:425px;width:24px;height:5px;background:rgba(29,33,68,0.72);"></div>
<div class="a" style="left:1191px;top:430px;width:24px;height:4px;background:rgba(29,33,68,0.72);"></div>
<div class="a" style="left:1191px;top:434px;width:24px;height:5px;background:rgba(136,136,216,0.26);"></div>
<div class="a" style="left:1191px;top:439px;width:24px;height:4px;background:rgba(29,33,68,0.72);"></div>
<div class="a" style="left:1191px;top:443px;width:24px;height:5px;background:rgba(29,33,68,0.72);"></div>
<div class="a" style="left:1191px;top:448px;width:24px;height:4px;background:rgba(0,100,230,0.40);"></div>
<div class="a" style="left:1191px;top:452px;width:24px;height:5px;background:rgba(29,33,68,0.72);"></div>
<div class="a" style="left:1215px;top:360px;width:24px;height:5px;background:rgba(9,91,177,0.78);"></div>
<div class="a" style="left:1215px;top:365px;width:24px;height:5px;background:rgba(9,91,177,0.78);"></div>
<div class="a" style="left:1215px;top:370px;width:24px;height:4px;background:rgba(29,35,111,0.78);"></div>
<div class="a" style="left:1215px;top:374px;width:24px;height:5px;background:rgba(0,100,230,0.40);"></div>
<div class="a" style="left:1215px;top:379px;width:24px;height:5px;background:rgba(29,35,111,0.78);"></div>
<div class="a" style="left:1215px;top:384px;width:24px;height:4px;background:rgba(29,35,111,0.78);"></div>
<div class="a" style="left:1215px;top:388px;width:24px;height:5px;background:rgba(29,35,111,0.78);"></div>
<div class="a" style="left:1215px;top:393px;width:24px;height:4px;background:rgba(9,91,177,0.78);"></div>
<div class="a" style="left:1215px;top:397px;width:24px;height:5px;background:rgba(29,33,68,0.72);"></div>
<div class="a" style="left:1215px;top:402px;width:24px;height:4px;background:rgba(29,33,68,0.72);"></div>
<div class="a" style="left:1215px;top:406px;width:24px;height:5px;background:rgba(136,136,216,0.26);"></div>
<div class="a" style="left:1215px;top:411px;width:24px;height:5px;background:rgba(29,33,68,0.72);"></div>
<div class="a" style="left:1215px;top:416px;width:24px;height:4px;background:rgba(9,91,177,0.78);"></div>
<div class="a" style="left:1215px;top:420px;width:24px;height:5px;background:rgba(29,33,68,0.72);"></div>
<div class="a" style="left:1215px;top:425px;width:24px;height:5px;background:rgba(136,136,216,0.26);"></div>
<div class="a" style="left:1215px;top:430px;width:24px;height:4px;background:rgba(29,33,68,0.72);"></div>
<div class="a" style="left:1215px;top:448px;width:24px;height:4px;background:rgba(29,33,68,0.72);"></div>
<div class="a" style="left:1215px;top:452px;width:24px;height:5px;background:rgba(29,33,68,0.72);"></div>
<div class="a" style="left:1239px;top:360px;width:24px;height:5px;background:rgba(9,91,177,0.78);"></div>
<div class="a" style="left:1239px;top:365px;width:24px;height:5px;background:rgba(9,91,177,0.78);"></div>
<div class="a" style="left:1239px;top:370px;width:24px;height:4px;background:rgba(9,91,177,0.78);"></div>
<div class="a" style="left:1239px;top:374px;width:24px;height:5px;background:rgba(136,136,216,0.26);"></div>
<div class="a" style="left:1239px;top:379px;width:24px;height:5px;background:rgba(9,91,177,0.78);"></div>
<div class="a" style="left:1239px;top:384px;width:24px;height:4px;background:rgba(29,35,111,0.78);"></div>
<div class="a" style="left:1239px;top:388px;width:24px;height:5px;background:rgba(9,91,177,0.78);"></div>
<div class="a" style="left:1239px;top:393px;width:24px;height:4px;background:rgba(136,136,216,0.26);"></div>
<div class="a" style="left:1239px;top:397px;width:24px;height:5px;background:rgba(0,100,230,0.40);"></div>
<div class="a" style="left:1239px;top:402px;width:24px;height:4px;background:rgba(0,100,230,0.40);"></div>
<div class="a" style="left:1239px;top:406px;width:24px;height:5px;background:rgba(29,33,68,0.72);"></div>
<div class="a" style="left:1239px;top:411px;width:24px;height:5px;background:rgba(29,33,68,0.72);"></div>
<div class="a" style="left:1239px;top:416px;width:24px;height:4px;background:rgba(29,33,68,0.72);"></div>
<div class="a" style="left:1239px;top:420px;width:24px;height:5px;background:rgba(29,33,68,0.72);"></div>
<div class="a" style="left:1239px;top:425px;width:24px;height:5px;background:rgba(0,100,230,0.40);"></div>
<div class="a" style="left:1239px;top:430px;width:24px;height:4px;background:rgba(9,91,177,0.78);"></div>
<div class="a" style="left:1239px;top:443px;width:24px;height:5px;background:rgba(29,33,68,0.72);"></div>
<div class="a" style="left:1239px;top:448px;width:24px;height:4px;background:rgba(29,33,68,0.72);"></div>
<div class="a" style="left:1239px;top:452px;width:24px;height:5px;background:rgba(136,136,216,0.26);"></div>
<div class="a" style="left:1239px;top:457px;width:24px;height:5px;background:rgba(29,33,68,0.72);"></div>
<div class="a" style="left:783px;top:465px;width:24px;height:3px;background:rgba(45,55,60,0.72);"></div>
<div class="a" style="left:831px;top:469px;width:24px;height:4px;background:rgba(45,55,60,0.72);"></div>
<div class="a" style="left:855px;top:479px;width:25px;height:5px;background:rgba(45,55,60,0.72);"></div>
<div class="a" style="left:903px;top:480px;width:24px;height:1px;background:rgba(45,55,60,0.72);"></div>
<div class="a" style="left:903px;top:489px;width:24px;height:2px;background:rgba(45,55,60,0.72);"></div>
<div class="a" style="left:951px;top:474px;width:48px;height:4px;background:rgba(45,55,60,0.72);"></div>
<div class="a" style="left:951px;top:488px;width:48px;height:5px;background:rgba(45,55,60,0.72);"></div>
<div class="a" style="left:999px;top:469px;width:24px;height:4px;background:rgba(45,55,60,0.72);"></div>
<div class="a" style="left:1023px;top:456px;width:24px;height:4px;background:rgba(45,55,60,0.72);"></div>
<div class="a" style="left:1071px;top:456px;width:24px;height:4px;background:rgba(45,55,60,0.72);"></div>
<div class="a" style="left:1071px;top:465px;width:48px;height:4px;background:rgba(45,55,60,0.72);"></div>
<div class="a" style="left:1095px;top:460px;width:24px;height:4px;background:rgba(9,91,177,0.7);"></div>
<div class="a" style="left:1071px;top:484px;width:24px;height:9px;background:rgba(45,55,60,0.72);"></div>
<div class="a" style="left:1095px;top:484px;width:24px;height:5px;background:rgba(45,55,60,0.72);"></div>
<div class="a" style="left:1143px;top:479px;width:24px;height:5px;background:rgba(45,55,60,0.72);"></div>
<div class="a" style="left:1191px;top:469px;width:48px;height:4px;background:rgba(45,55,60,0.72);"></div>
<div class="a" style="left:1239px;top:460px;width:24px;height:4px;background:rgba(45,55,60,0.72);"></div>
<div class="a" style="left:1239px;top:489px;width:24px;height:3px;background:rgba(45,55,60,0.72);"></div>
<div class="a" style="left:1191px;top:451px;width:24px;height:8px;background:rgba(45,55,60,0.72);"></div>
<div class="a" style="left:853px;top:124px;width:2px;height:137px;background:rgba(100,114,225,0.8);"></div>
<div class="a" style="left:854px;top:261px;width:1px;height:270px;background:rgba(20,45,70,0.55);"></div>
<div class="a" style="left:854px;top:531px;width:1px;height:114px;background:rgba(108,122,230,0.9);"></div>
<div class="a" style="left:853px;top:143px;width:3px;height:3px;background:#6e7ce8;border-radius:50%"></div>
<div class="a" style="left:853px;top:181px;width:3px;height:3px;background:#6e7ce8;border-radius:50%"></div>
<div class="a" style="left:853px;top:218px;width:3px;height:3px;background:#6e7ce8;border-radius:50%"></div>
<div class="a" style="left:853px;top:253px;width:3px;height:3px;background:#6e7ce8;border-radius:50%"></div>
<div class="a" style="left:853px;top:286px;width:3px;height:3px;background:#6e7ce8;border-radius:50%"></div>
<div class="a" style="left:853px;top:336px;width:3px;height:3px;background:#6e7ce8;border-radius:50%"></div>
<div class="a" style="left:853px;top:352px;width:3px;height:3px;background:#6e7ce8;border-radius:50%"></div>
<div class="a" style="left:853px;top:368px;width:3px;height:3px;background:#6e7ce8;border-radius:50%"></div>
<div class="a" style="left:853px;top:382px;width:3px;height:3px;background:#6e7ce8;border-radius:50%"></div>
<div class="a" style="left:853px;top:393px;width:3px;height:3px;background:#6e7ce8;border-radius:50%"></div>
<div class="a" style="left:853px;top:404px;width:3px;height:3px;background:#6e7ce8;border-radius:50%"></div>
<div class="a" style="left:853px;top:416px;width:3px;height:3px;background:#6e7ce8;border-radius:50%"></div>
<div class="a" style="left:853px;top:427px;width:3px;height:3px;background:#6e7ce8;border-radius:50%"></div>
<div class="a" style="left:853px;top:442px;width:3px;height:3px;background:#6e7ce8;border-radius:50%"></div>
<div class="a" style="left:853px;top:455px;width:3px;height:3px;background:#6e7ce8;border-radius:50%"></div>
<div class="a" style="left:853px;top:470px;width:3px;height:3px;background:#6e7ce8;border-radius:50%"></div>
<div class="a" style="left:853px;top:485px;width:3px;height:3px;background:#6e7ce8;border-radius:50%"></div>
<div class="a" style="left:853px;top:501px;width:3px;height:3px;background:#6e7ce8;border-radius:50%"></div>
<div class="a" style="left:853px;top:516px;width:3px;height:3px;background:#6e7ce8;border-radius:50%"></div>
<div class="a" style="left:853px;top:533px;width:3px;height:3px;background:#6e7ce8;border-radius:50%"></div>
<div class="a" style="left:853px;top:550px;width:3px;height:3px;background:#6e7ce8;border-radius:50%"></div>
<div class="a" style="left:853px;top:567px;width:3px;height:3px;background:#6e7ce8;border-radius:50%"></div>
<div class="a" style="left:853px;top:584px;width:3px;height:3px;background:#6e7ce8;border-radius:50%"></div>
<div class="a" style="left:853px;top:600px;width:3px;height:3px;background:#6e7ce8;border-radius:50%"></div>
<div class="a" style="left:853px;top:617px;width:3px;height:3px;background:#6e7ce8;border-radius:50%"></div>
<div class="a" style="left:853px;top:633px;width:3px;height:3px;background:#6e7ce8;border-radius:50%"></div>
<div class="a" style="left:851px;top:644px;width:9px;height:9px;background:transparent;border:1px solid #6e7ce8"></div>
<div class="a" style="left:854px;top:647px;width:2px;height:2px;background:#6e7ce8;"></div>
<div class="a" style="left:776px;top:207px;width:496px;height:2px;background:#6e7ce8;"></div>
<div class="a" style="left:776px;top:495px;width:496px;height:2px;background:#6e7ce8;"></div>
<div class="a" style="left:770px;top:213px;width:2px;height:280px;background:#6e7ce8;"></div>
<div class="a" style="left:1273px;top:213px;width:2px;height:280px;background:#6e7ce8;"></div>
<div class="a" style="left:768px;top:205px;width:8px;height:8px;background:#6e7ce8;box-shadow:0 0 0 1px rgba(0,0,0,0.25)"></div>
<div class="a" style="left:1019px;top:205px;width:8px;height:8px;background:#6e7ce8;box-shadow:0 0 0 1px rgba(0,0,0,0.25)"></div>
<div class="a" style="left:1270px;top:205px;width:8px;height:8px;background:#6e7ce8;box-shadow:0 0 0 1px rgba(0,0,0,0.25)"></div>
<div class="a" style="left:768px;top:349px;width:8px;height:8px;background:#6e7ce8;box-shadow:0 0 0 1px rgba(0,0,0,0.25)"></div>
<div class="a" style="left:1270px;top:349px;width:8px;height:8px;background:#6e7ce8;box-shadow:0 0 0 1px rgba(0,0,0,0.25)"></div>
<div class="a" style="left:768px;top:493px;width:8px;height:8px;background:#6e7ce8;box-shadow:0 0 0 1px rgba(0,0,0,0.25)"></div>
<div class="a" style="left:1019px;top:493px;width:8px;height:8px;background:#6e7ce8;box-shadow:0 0 0 1px rgba(0,0,0,0.25)"></div>
<div class="a" style="left:1270px;top:493px;width:8px;height:8px;background:#6e7ce8;box-shadow:0 0 0 1px rgba(0,0,0,0.25)"></div>
<div class="a" style="left:851px;top:355px;width:9px;height:9px;background:rgba(20,20,40,0.3);border:1px solid #6e7ce8"></div>
<svg style="left:844px;top:304px" width="21" height="21" viewBox="0 0 21 21"><path d="M10.5 0.5L12.3 5.5H8.7zM10.5 20.5L12.3 15.5H8.7zM0.5 10.5L5.5 8.7V12.3zM20.5 10.5L15.5 8.7V12.3z" fill="#e8eaff"/><circle cx="10.5" cy="10.5" r="4.6" fill="none" stroke="#e8eaff" stroke-width="3.2"/><path d="M10.5 2.5V6M10.5 15V18.5M2.5 10.5H6M15 10.5H18.5" stroke="#6e7ce8" stroke-width="1"/><circle cx="10.5" cy="10.5" r="4.6" fill="none" stroke="#6e7ce8" stroke-width="1.3"/><circle cx="10.5" cy="10.5" r="3.2" fill="none" stroke="rgba(20,30,60,0.7)" stroke-width="0.8"/><path d="M10.5 9L12 10.5L10.5 12L9 10.5z" fill="none" stroke="#6e7ce8" stroke-width="0.8"/></svg>
<div class="a" style="left:366px;top:667px;width:1330px;height:18px;background:#e87b14;border:1px solid #8c8c8c;border-right:0"></div>
<svg style="left:371px;top:669px" width="14" height="12" viewBox="0 0 14 12"><path d="M7 0.5L13.5 11.5H0.5z" fill="#f7d000" stroke="#3a2a00" stroke-width="0.6"/><path d="M6.3 3.5h1.4l-.2 4.5h-1z M6.3 9h1.4v1.4h-1.4z" fill="#111"/></svg>
<div class="a" style="left:391px;top:670px;font-size:10.5px;color:#111;letter-spacing:-0.2px">Ce projet contient des erreurs d'expression : erreur 1 sur 17</div>
<div class="a" style="left:1594px;top:668px;width:14px;height:16px;background:#f0922a;"></div>
<svg style="left:1595px;top:670px" width="12" height="12"><path d="M1 1L11 11M11 1L1 11" stroke="#111" stroke-width="1.8"/></svg>
<div class="a" style="left:1628px;top:668px;width:14px;height:16px;background:#f0922a;"></div>
<div class="a" style="left:1645px;top:668px;width:14px;height:16px;background:#f0922a;"></div>
<div class="a" style="left:1662px;top:668px;width:14px;height:16px;background:#f0922a;"></div>
<div class="a" style="left:1679px;top:668px;width:14px;height:16px;background:#f0922a;"></div>
<svg style="left:1631px;top:670px" width="8" height="12"><path d="M7 0V12L0 6z" fill="#111"/></svg>
<svg style="left:1646px;top:670px" width="12" height="12"><circle cx="7" cy="5" r="3.6" fill="none" stroke="#111" stroke-width="1.5"/><path d="M4.5 7.5L0.5 11.5" stroke="#111" stroke-width="1.8"/></svg>
<svg style="left:1665px;top:670px" width="8" height="12"><path d="M0 0V12L7 6z" fill="#111"/></svg>
<svg style="left:1680px;top:672px" width="13" height="8"><path d="M1 7L6.5 1.5L12 7" fill="none" stroke="#111" stroke-width="2"/></svg>
<div class="a" style="left:366px;top:689px;width:1331px;height:1px;background:#1a1a1a;"></div>
<div class="a" style="left:371px;top:693px;width:69px;height:17px;background:#1c1c1c;border:1px solid #2e2e2e;border-radius:2px"></div>
<div class="a" style="left:378px;top:696px;font-size:11px;color:#c5c5c5;letter-spacing:0.14px">25 %</div>
<svg style="left:427px;top:700px" width="8" height="5"><path d="M0.5 0.5L4.0 4L7.5 0.5" fill="none" stroke="#b0b0b0" stroke-width="1.1"/></svg>
<div class="a" style="left:445px;top:693px;width:1px;height:16px;background:#2e2e2e;"></div>
<div class="a" style="left:451px;top:693px;width:86px;height:17px;background:#1c1c1c;border:1px solid #2e2e2e;border-radius:2px"></div>
<div class="a" style="left:458px;top:696px;font-size:11px;color:#c5c5c5;letter-spacing:0.2px">(Un quart)</div>
<svg style="left:524px;top:700px" width="8" height="5"><path d="M0.5 0.5L4.0 4L7.5 0.5" fill="none" stroke="#b0b0b0" stroke-width="1.1"/></svg>
<div class="a" style="left:541px;top:693px;width:1px;height:16px;background:#2e2e2e;"></div>
<div class="a" style="left:547px;top:692px;width:21px;height:19px;background:#171717;border-radius:2px"></div>
<svg style="left:550px;top:695px" width="15" height="14" viewBox="0 0 15 14"><path d="M13.5 5V0.7H0.7V11.3H7" fill="none" stroke="#c0c0c0" stroke-width="1.2"/><path d="M8 2L4 6.5H7L5.5 10L10 5.5H7z" fill="#c0c0c0"/><path d="M9 10h6l-3 3z" fill="#c0c0c0"/></svg>
<div class="a" style="left:570px;top:692px;width:20px;height:19px;background:#171717;border-radius:2px"></div>
<svg style="left:573px;top:696px" width="14" height="12" viewBox="0 0 14 12"><rect x="0" y="0" width="14" height="12" fill="#111"/><path d="M4 1h3v3.3H4zM10 1h3v3.3h-3zM1 4.3h3v3.3H1zM7 4.3h3v3.3H7zM4 7.6h3v3.4H4zM10 7.6h3v3.4h-3z" fill="#1e6ab4"/><rect x="0.6" y="0.6" width="12.8" height="10.8" fill="none" stroke="#2d8ceb" stroke-width="1.2"/></svg>
<div class="a" style="left:592px;top:692px;width:20px;height:19px;background:#171717;border-radius:2px"></div>
<svg style="left:595px;top:694px" width="15" height="14" viewBox="0 0 15 14"><path d="M1 7L6 1.5H13.5V12.5H1z" fill="none" stroke="#2d8ceb" stroke-width="1.3"/><g fill="#2d8ceb"><circle cx="6" cy="1.5" r="1.3"/><circle cx="13.5" cy="1.5" r="1.3"/><circle cx="1" cy="7" r="1.3"/><circle cx="13.5" cy="7" r="1.1"/><circle cx="1" cy="12.5" r="1.3"/><circle cx="13.5" cy="12.5" r="1.3"/></g></svg>
<svg style="left:617px;top:695px" width="14" height="12" viewBox="0 0 14 12"><rect x="0.6" y="0.6" width="12.8" height="10.8" fill="none" stroke="#c0c0c0" stroke-width="1.2"/><rect x="3" y="3" width="8" height="6" fill="#c0c0c0"/></svg>
<svg style="left:638px;top:694px" width="16" height="16" viewBox="0 0 16 16"><path d="M0.6 2.5H14.4V11.5H0.6z" fill="none" stroke="#c0c0c0" stroke-width="1.1" stroke-dasharray="4 1.5"/><path d="M7.5 0V5M5 7h5M7.5 4.5V9.5" stroke="#c0c0c0" stroke-width="1.1"/><path d="M9 12.5h6l-3 3z" fill="#c0c0c0"/></svg>
<div class="a" style="left:662px;top:693px;width:1px;height:16px;background:#2e2e2e;"></div>
<svg style="left:672px;top:694px" width="15" height="16" viewBox="0 0 15 16"><circle cx="7.5" cy="4" r="3.5" fill="#e52222"/><circle cx="4" cy="9" r="3.5" fill="#22b922"/><circle cx="10" cy="8.5" r="3.5" fill="#3b6ef0"/><path d="M9 12.5h6l-3 3z" fill="#c0c0c0"/></svg>
<svg style="left:694px;top:695px" width="13" height="13" viewBox="0 0 13 13"><circle cx="6.5" cy="6.5" r="6" fill="#bdbdbd"/><circle cx="6.5" cy="6.5" r="2.5" fill="#232323"/><path d="M6.5 0.5L8 4M12.5 6L9 6.5M9.5 11.5L7.5 8.5M2.5 11L5 8M0.5 5.5L4 6M3 1.5L5 4.5" stroke="#232323" stroke-width="1"/></svg>
<div class="a" style="left:713px;top:695px;font-size:12px;color:#2d8ceb;letter-spacing:-0.67px">+0,0</div>
<div class="a" style="left:750px;top:693px;width:1px;height:16px;background:#2e2e2e;"></div>
<svg style="left:759px;top:696px" width="15" height="11" viewBox="0 0 15 11"><path d="M0 2.5h3.5L5 0.5h5l1.5 2H15V11H0z" fill="#c0c0c0"/><circle cx="7.5" cy="6.5" r="2.8" fill="#232323"/><circle cx="7.5" cy="6.5" r="1.6" fill="#c0c0c0"/></svg>
<svg style="left:780px;top:694px" width="16" height="13" viewBox="0 0 16 13"><path d="M0.5 8C3 4 10 4 12.5 8C10 12 3 12 0.5 8z" fill="#3e3e3e"/><circle cx="6.5" cy="8" r="2" fill="#232323"/><circle cx="12.5" cy="3.5" r="3" fill="none" stroke="#3e3e3e" stroke-width="1.3"/></svg>
<div class="a" style="left:804px;top:693px;width:1px;height:16px;background:#2e2e2e;"></div>
<div class="a" style="left:809px;top:692px;width:70px;height:18px;background:#1c1c1c;border:1px solid #2e2e2e;border-radius:2px"></div>
<div class="a" style="left:818px;top:696px;font-size:11px;color:#c0c0c0;letter-spacing:-0.08px">0;00;00;13</div>
<div class="a" style="left:884px;top:693px;width:1px;height:16px;background:#2e2e2e;"></div>
<div class="a" style="left:1701px;top:70px;width:219px;height:643px;background:#232323;"></div>
<div class="a" style="left:1714px;top:78px;font-size:11.5px;color:#d0d0d0;letter-spacing:-0.23px">Info</div>
<svg style="left:1888px;top:81px" width="8" height="8"><path d="M0 0.5H8M0 4H8M0 7.5H8" stroke="#c0c0c0" stroke-width="1"/></svg>
<div class="a" style="left:1709px;top:115px;width:20px;height:20px;background:#000;"></div>
<div class="a" style="left:1735px;top:104.0px;font-size:10.5px;color:#a0a0a0;letter-spacing:-0.1px">R :</div>
<div class="a" style="left:1735px;top:117.3px;font-size:10.5px;color:#a0a0a0;letter-spacing:-0.1px">V :</div>
<div class="a" style="left:1735px;top:130.6px;font-size:10.5px;color:#a0a0a0;letter-spacing:-0.1px">B :</div>
<div class="a" style="left:1735px;top:143.9px;font-size:10.5px;color:#a0a0a0;letter-spacing:-0.1px">A :</div>
<div class="a" style="left:1754px;top:142px;font-size:10.5px;color:#a0a0a0;">0</div>
<div class="a" style="left:1803px;top:106px;width:1px;height:49px;background:#3a3a3a;"></div>
<svg style="left:1813px;top:126px" width="9" height="9"><path d="M4.5 0V9M0 4.5H9" stroke="#d0d0d0" stroke-width="1"/></svg>
<div class="a" style="left:1826px;top:104px;font-size:10.5px;color:#a0a0a0;letter-spacing:0.05px">X : 2464</div>
<div class="a" style="left:1827px;top:116px;font-size:10.5px;color:#a0a0a0;letter-spacing:-0.3px">Y : -460</div>
<div class="a" style="left:1707px;top:161px;width:191px;height:2px;background:#333;"></div>
<div class="a" style="left:1709px;top:167px;font-size:10.5px;color:#a0a0a0;letter-spacing:0.23px">Calque de forme 1</div>
<div class="a" style="left:1709px;top:181px;font-size:10.5px;color:#a0a0a0;letter-spacing:0.21px">Durée : 0;00;30;00</div>
<div class="a" style="left:1709px;top:194px;width:190px;height:4px;overflow:hidden"><div class="a" style="left:0;top:0;font-size:10.5px;color:#a0a0a0;letter-spacing:-0.2px">Entrée : 0;00;00;00  Sortie : 0;00;29;29</div></div>
<div class="a" style="left:1702px;top:201px;width:204px;height:1px;background:#111;"></div>
<div class="a" style="left:1714px;top:211px;font-size:11.5px;color:#d0d0d0;letter-spacing:-0.08px">Prévisualisation</div>
<svg style="left:1888px;top:214px" width="8" height="8"><path d="M0 0.5H8M0 4H8M0 7.5H8" stroke="#c0c0c0" stroke-width="1"/></svg>
<svg style="left:1747px;top:240px" width="14" height="10"><path d="M0 0h2v10H0z M13 0V10L3 5z" fill="#bdbdbd"/></svg>
<svg style="left:1770px;top:240px" width="14" height="10"><path d="M12 0h2v10h-2z M10 0V10L0 5z" fill="#bdbdbd"/></svg>
<svg style="left:1797px;top:240px" width="10" height="10"><path d="M0 0V10L10 5z" fill="#bdbdbd"/></svg>
<svg style="left:1820px;top:240px" width="14" height="10"><path d="M0 0h2v10H0z M4 0V10L14 5z" fill="#bdbdbd"/></svg>
<svg style="left:1844px;top:240px" width="13" height="10"><path d="M11 0h2v10h-2z M0 0V10L10 5z" fill="#bdbdbd"/></svg>
<div class="a" style="left:1707px;top:259px;width:195px;height:2px;background:#333;"></div>
<div class="a" style="left:1708px;top:267px;font-size:10.5px;color:#9a9a9a;letter-spacing:0.04px">Raccourci</div>
<div class="a" style="left:1708px;top:283px;width:168px;height:20px;background:#1c1c1c;border:1px solid #2e2e2e;border-radius:3px"></div>
<div class="a" style="left:1715px;top:287px;font-size:11px;color:#c5c5c5;letter-spacing:0.01px">Barre d'espacement</div>
<svg style="left:1862px;top:291px" width="8" height="5"><path d="M0.5 0.5L4.0 4L7.5 0.5" fill="none" stroke="#b0b0b0" stroke-width="1.1"/></svg>
<svg style="left:1884px;top:287px" width="14" height="13" viewBox="0 0 14 13"><path d="M3 4.5A4.5 4.5 0 1 1 7 10" fill="none" stroke="#bdbdbd" stroke-width="1.5"/><path d="M0 2.5L5 1.5L4 6.5z" fill="#bdbdbd"/><path d="M1 12H13" stroke="#bdbdbd" stroke-width="1.4"/></svg>
<div class="a" style="left:1702px;top:310px;width:204px;height:1px;background:#111;"></div>
<div class="a" style="left:1714px;top:320px;font-size:11.5px;color:#d0d0d0;letter-spacing:-0.18px">Effets et paramètres prédéfinis</div>
<svg style="left:1888px;top:323px" width="8" height="8"><path d="M0 0.5H8M0 4H8M0 7.5H8" stroke="#c0c0c0" stroke-width="1"/></svg>
<div class="a" style="left:1707px;top:342px;width:195px;height:19px;background:#1a1a1a;border:1px solid #2c2c2c;border-radius:3px"></div>
<svg style="left:1714px;top:346px" width="16" height="11" viewBox="0 0 16 11"><circle cx="7" cy="4" r="3.3" fill="none" stroke="#bdbdbd" stroke-width="1.2"/><path d="M4.5 6.5L0.5 10.5" stroke="#bdbdbd" stroke-width="1.3"/><path d="M11 7h5l-2.5 2.5z" fill="#bdbdbd"/></svg>
<div class="a" style="left:1702px;top:364px;width:204px;height:2px;background:#0c0c0c;"></div>
<div class="a" style="left:1905px;top:364px;width:2px;height:17px;background:#0c0c0c;"></div>
<svg style="left:1887px;top:368px" width="12" height="12"><path d="M3 0H12V12H3V9H0z" fill="#bdbdbd"/><path d="M0 9L3 12V9z" fill="#232323"/></svg>
<div class="a" style="left:2px;top:718px;width:1916px;height:360px;background:#232323;"></div>
<div class="a" style="left:1px;top:717px;width:1918px;height:1px;background:#2d8ceb;"></div>
<div class="a" style="left:1px;top:717px;width:1px;height:362px;background:#2d8ceb;"></div>
<div class="a" style="left:1918px;top:717px;width:1px;height:362px;background:#2d8ceb;"></div>
<div class="a" style="left:1px;top:1078px;width:1918px;height:1px;background:#2d8ceb;"></div>
<svg style="left:12px;top:729px" width="6" height="6"><path d="M0 0L6 6M6 0L0 6" stroke="#8a8a8a" stroke-width="1"/></svg>
<div class="a" style="left:27px;top:725px;width:10px;height:10px;background:#b39f7e;"></div>
<div class="a" style="left:49px;top:725px;font-size:11.5px;color:#d2d2d2;letter-spacing:-0.23px">Composition 1</div>
<svg style="left:131px;top:728px" width="8" height="8"><path d="M0 0.5H8M0 4H8M0 7.5H8" stroke="#c0c0c0" stroke-width="1"/></svg>
<div class="a" style="left:15px;top:749px;font-size:13.5px;color:#2d8ceb;font-weight:bold;letter-spacing:0.88px">0;00;00;13</div>
<div class="a" style="left:12px;top:766px;font-size:10.5px;color:#2a6ab0;letter-spacing:0.02px">00013 (29.97 ips)</div>
<div class="a" style="left:106px;top:753px;width:260px;height:18px;background:#171717;border:1px solid #2c2c2c;border-radius:3px"></div>
<svg style="left:113px;top:757px" width="17" height="11" viewBox="0 0 17 11"><circle cx="7.5" cy="4" r="3.5" fill="none" stroke="#bdbdbd" stroke-width="1.2"/><path d="M5 6.5L0.5 10.5" stroke="#bdbdbd" stroke-width="1.3"/><path d="M11.5 7h5l-2.5 2.5z" fill="#bdbdbd"/></svg>
<svg style="left:382px;top:757px" width="18" height="13" viewBox="0 0 18 13"><path d="M0 1.5h4M4 0.5h5v2H4z M7 1.5H9V5.5h2M9 5.5V9.5h2" fill="#bdbdbd" stroke="#bdbdbd" stroke-width="1.1"/><rect x="11" y="4.3" width="5" height="2.4" fill="#bdbdbd"/><rect x="11" y="8.3" width="5" height="2.4" fill="#bdbdbd"/><path d="M12 11h5l-2.5 2z" fill="#bdbdbd"/></svg>
<svg style="left:416px;top:756px" width="16" height="12" viewBox="0 0 16 12"><path d="M2 4.5A6 4.5 0 0 1 14 4.5z" fill="#bdbdbd"/><path d="M7 4.5h2V9H7z" fill="#bdbdbd"/><path d="M0 8h16v4H0z" fill="#7a7a7a"/><circle cx="8" cy="4.5" r="1.5" fill="#232323"/></svg>
<svg style="left:443px;top:755px" width="15" height="15" viewBox="0 0 15 15"><rect x="4" y="0.6" width="10.4" height="10.4" fill="none" stroke="#bdbdbd" stroke-width="1.2"/><path d="M6.5 5.5h5" stroke="#bdbdbd" stroke-width="1.3"/><path d="M5.5 1v9M13 1v9" stroke="#bdbdbd" stroke-width="1" stroke-dasharray="1 1"/><path d="M2.5 3V12.5H12M0.6 5V14.4H10" fill="none" stroke="#bdbdbd" stroke-width="1"/></svg>
<svg style="left:469px;top:755px" width="15" height="15" viewBox="0 0 15 15"><circle cx="5" cy="10" r="4.3" fill="none" stroke="#bdbdbd" stroke-width="1"/><circle cx="7" cy="8" r="4.3" fill="none" stroke="#bdbdbd" stroke-width="1"/><circle cx="9.5" cy="5.5" r="5" fill="#6f6f6f" stroke="#bdbdbd" stroke-width="1.1"/></svg>
<svg style="left:502px;top:754px" width="17" height="15" viewBox="0 0 17 15"><rect x="0.6" y="2.6" width="15.8" height="11.8" fill="none" stroke="#bdbdbd" stroke-width="1.2"/><path d="M3 6C6 6 6 11 9 11S13 11 14 11" fill="none" stroke="#bdbdbd" stroke-width="1.1"/><path d="M3 0v2.5M6 0v2.5M9 0v2.5M12 0v2.5" stroke="#bdbdbd" stroke-width="1"/></svg>
<div class="a" style="left:3px;top:779px;width:532px;height:2px;background:#111;"></div>
<div class="a" style="left:3px;top:781px;width:532px;height:18px;background:#262626;"></div>
<div class="a" style="left:3px;top:799px;width:532px;height:1px;background:#111;"></div>
<svg style="left:8px;top:787px" width="11" height="7" viewBox="0 0 11 7"><path d="M0.3 3.5C3 -1 8 -1 10.7 3.5C8 8 3 8 0.3 3.5z" fill="#bdbdbd"/><circle cx="5.5" cy="3.5" r="1.7" fill="#262626"/></svg>
<svg style="left:22px;top:785px" width="12" height="11" viewBox="0 0 12 11"><path d="M0 3.5h2.5L6 0.5V10.5L2.5 7.5H0z" fill="#bdbdbd"/><path d="M8 3a3 3 0 0 1 0 5M9.5 1.5a5 5 0 0 1 0 8" fill="none" stroke="#bdbdbd" stroke-width="1"/></svg>
<div class="a" style="left:39px;top:787px;width:7px;height:7px;background:#bdbdbd;border-radius:50%"></div>
<svg style="left:53px;top:785px" width="10" height="11" viewBox="0 0 10 11"><path d="M2.3 5V3a2.7 2.7 0 0 1 5.4 0V5" fill="none" stroke="#bdbdbd" stroke-width="1.3"/><rect x="0.5" y="5" width="9" height="6" fill="#bdbdbd"/><rect x="4.3" y="6.5" width="1.4" height="3" fill="#262626"/></svg>
<div class="a" style="left:70px;top:784px;width:1px;height:12px;background:#161616;"></div>
<div class="a" style="left:101px;top:784px;width:1px;height:12px;background:#161616;"></div>
<div class="a" style="left:134px;top:784px;width:1px;height:12px;background:#161616;"></div>
<div class="a" style="left:264px;top:784px;width:1px;height:12px;background:#161616;"></div>
<div class="a" style="left:401px;top:784px;width:1px;height:12px;background:#161616;"></div>
<div class="a" style="left:518px;top:784px;width:1px;height:12px;background:#161616;"></div>
<svg style="left:83px;top:785px" width="12" height="11" viewBox="0 0 12 11"><path d="M0 0H5.5L12 6.5L7.5 11L0.5 4.5z" fill="#bdbdbd"/><circle cx="2.6" cy="2.6" r="1" fill="#262626"/></svg>
<div class="a" style="left:107px;top:785px;font-size:10px;color:#9a9a9a;">N°</div>
<div class="a" style="left:140px;top:785px;font-size:10px;color:#9a9a9a;letter-spacing:-0.57px">Nom des calques</div>
<svg style="left:269px;top:786px" width="12" height="10" viewBox="0 0 12 10"><path d="M1 5A5 4.5 0 0 1 11 5z" fill="#bdbdbd"/><path d="M5 5h2v5H5z M0 7h12v1.2H0z" fill="#bdbdbd"/><circle cx="4" cy="3" r="0.9" fill="#232323"/><circle cx="8" cy="3" r="0.9" fill="#232323"/></svg>
<svg style="left:286px;top:786px" width="10" height="10" viewBox="0 0 10 10"><circle cx="5" cy="5" r="2.2" fill="none" stroke="#bdbdbd" stroke-width="1"/><path d="M5 0v1.8M5 8.2v1.8M0 5h1.8M8.2 5h1.8M1.4 1.4l1.3 1.3M7.3 7.3l1.3 1.3M1.4 8.6l1.3-1.3M7.3 2.7l1.3-1.3" stroke="#bdbdbd" stroke-width="0.9"/></svg>
<svg style="left:300px;top:785px" width="11" height="11"><path d="M0.5 0.5L10.5 10.5" stroke="#bdbdbd" stroke-width="1.2" stroke-dasharray="2 1"/></svg>
<div class="a" style="left:314px;top:784px;font-family:'Liberation Sans',sans-serif;font-style:italic;font-size:13px;color:#bdbdbd;letter-spacing:-0.8px;line-height:12px">fx</div>
<svg style="left:329px;top:785px" width="12" height="11" viewBox="0 0 12 11"><rect x="0.5" y="0.5" width="11" height="10" fill="none" stroke="#bdbdbd" stroke-width="1"/><path d="M2.5 1v9M9.5 1v9" stroke="#bdbdbd" stroke-width="1" stroke-dasharray="1 1"/><rect x="3.5" y="2.5" width="5" height="6" fill="#bdbdbd"/></svg>
<svg style="left:344px;top:785px" width="13" height="11" viewBox="0 0 13 11"><circle cx="4" cy="7" r="3.5" fill="none" stroke="#bdbdbd" stroke-width="1"/><circle cx="8" cy="4.5" r="4" fill="#777" stroke="#bdbdbd" stroke-width="1"/></svg>
<svg style="left:360px;top:785px" width="11" height="11" viewBox="0 0 11 11"><circle cx="5.5" cy="5.5" r="5" fill="none" stroke="#bdbdbd" stroke-width="1"/><path d="M9 2L2 9A5 5 0 0 0 9 2z" fill="#bdbdbd"/></svg>
<svg style="left:375px;top:785px" width="10" height="11" viewBox="0 0 10 11"><path d="M5 0.5L9.5 3V8L5 10.5L0.5 8V3z M0.5 3L5 5.5L9.5 3M5 5.5V10.5" fill="none" stroke="#bdbdbd" stroke-width="1"/></svg>
<div class="a" style="left:407px;top:785px;font-size:10px;color:#9a9a9a;letter-spacing:-0.45px">Parent et lien</div>
<div class="a" style="left:3px;top:800px;width:532px;height:16px;background:#2c2c2c;"></div>
<div class="a" style="left:3px;top:816px;width:532px;height:1px;background:#1a1a1a;"></div>
<div class="a" style="left:51px;top:801px;width:13px;height:14px;background:#1c1c1c;"></div>
<svg style="left:75px;top:804px" width="5" height="8"><path d="M0.5 0.5L4 4L0.5 7.5" fill="none" stroke="#b0b0b0" stroke-width="1"/></svg>
<div class="a" style="left:87px;top:802px;width:12px;height:12px;background:#b8ccb8;"></div>
<div class="a" style="left:108px;top:802px;font-size:11px;color:#b0b0b0;">1</div>
<div class="a" style="left:136px;top:802px;width:16px;height:12px;background:#e8e8e8;border-radius:1px"></div>
<div class="a" style="left:137px;top:803px;width:14px;height:7px;background:linear-gradient(90deg,#999 0 14%,#ff0 14% 35%,#0f0 35% 57%,#f0a 57% 78%,#44f 78%);"></div>
<div class="a" style="left:137px;top:810px;width:14px;height:3px;background:linear-gradient(90deg,#000 0 50%,#eee 50%,#000);"></div>
<div class="a" style="left:157px;top:802px;font-size:11.5px;color:#b5b5b5;letter-spacing:0.27px">[Futuri...unds.mp3]</div>
<div class="a" style="left:268px;top:801px;width:15px;height:14px;background:#1e1e1e;"></div>
<svg style="left:270px;top:803px" width="12" height="10" viewBox="0 0 12 10"><path d="M1 5A5 4.5 0 0 1 11 5z" fill="#bdbdbd"/><path d="M5 5h2v5H5z M0 7h12v1.2H0z" fill="#bdbdbd"/><circle cx="4" cy="3" r="0.9" fill="#232323"/><circle cx="8" cy="3" r="0.9" fill="#232323"/></svg>
<div class="a" style="left:299px;top:801px;width:13px;height:14px;background:#1e1e1e;"></div>
<svg style="left:300px;top:803px" width="12" height="11"><path d="M0.5 10.5L11.5 0.5" stroke="#bdbdbd" stroke-width="1.3"/></svg>
<div class="a" style="left:359px;top:801px;width:13px;height:14px;background:#1c1c1c;"></div>
<svg style="left:406px;top:802px" width="13" height="12" viewBox="0 0 13 12"><path d="M8.01 1.12 L8.71 1.45 L9.35 1.88 L9.91 2.40 L10.39 3.00 L10.77 3.66 L11.05 4.36 L11.22 5.09 L11.28 5.83 L11.23 6.57 L11.07 7.29 L10.81 7.97 L10.45 8.60 L10.01 9.17 L9.49 9.66 L8.92 10.07 L8.29 10.39 L7.63 10.60 L6.95 10.72 L6.27 10.74 L5.60 10.65 L4.96 10.47 L4.35 10.20 L3.80 9.85 L3.31 9.42 L2.90 8.93 L2.56 8.40 L2.31 7.82 L2.15 7.22 L2.08 6.61 L2.10 6.01 L2.21 5.42 L2.40 4.87 L2.67 4.35 L3.01 3.88 L3.40 3.48 L3.85 3.14 L4.33 2.88 L4.84 2.69 L5.36 2.59 L5.89 2.56 L6.41 2.61 L6.90 2.73 L7.36 2.92 L7.79 3.18 L8.16 3.49 L8.48 3.84 L8.73 4.23 L8.93 4.65 L9.05 5.08 L9.11 5.52 L9.10 5.95 L9.03 6.37 L8.90 6.77 L8.72 7.13 L8.49 7.45 L8.22 7.73 L7.91 7.96 L7.59 8.14 L7.25 8.26 L6.90 8.33 L6.56 8.35 L6.23 8.31 L5.91 8.23 L5.63 8.10 L5.37 7.94 L5.14 7.74 L4.96 7.52 L4.82 7.28 L4.72 7.03 L4.66 6.78 L4.64 6.53 L4.66 6.29 L4.72 6.06 L4.81 5.86 L4.92 5.68 L5.06 5.53 L5.21 5.41 L5.37 5.32 L5.54 5.26 L5.70 5.23" fill="none" stroke="#c0c0c0" stroke-width="1.15"/></svg>
<div class="a" style="left:424px;top:801px;width:90px;height:14px;background:#1c1c1c;"></div>
<div class="a" style="left:432px;top:802px;font-size:11px;color:#c5c5c5;letter-spacing:0.04px">Aucun(e)</div>
<svg style="left:501px;top:806px" width="8" height="5"><path d="M0.5 0.5L4.0 4L7.5 0.5" fill="none" stroke="#b0b0b0" stroke-width="1.1"/></svg>
<div class="a" style="left:3px;top:817px;width:532px;height:16px;background:#2c2c2c;"></div>
<div class="a" style="left:3px;top:833px;width:532px;height:1px;background:#1a1a1a;"></div>
<div class="a" style="left:51px;top:818px;width:13px;height:14px;background:#1c1c1c;"></div>
<svg style="left:75px;top:821px" width="5" height="8"><path d="M0.5 0.5L4 4L0.5 7.5" fill="none" stroke="#b0b0b0" stroke-width="1"/></svg>
<div class="a" style="left:87px;top:819px;width:12px;height:12px;background:#b8ccb8;"></div>
<div class="a" style="left:108px;top:819px;font-size:11px;color:#b0b0b0;">2</div>
<div class="a" style="left:136px;top:819px;width:16px;height:12px;background:#e8e8e8;border-radius:1px"></div>
<div class="a" style="left:137px;top:820px;width:14px;height:7px;background:linear-gradient(90deg,#999 0 14%,#ff0 14% 35%,#0f0 35% 57%,#f0a 57% 78%,#44f 78%);"></div>
<div class="a" style="left:137px;top:827px;width:14px;height:3px;background:linear-gradient(90deg,#000 0 50%,#eee 50%,#000);"></div>
<div class="a" style="left:157px;top:819px;font-size:11.5px;color:#b5b5b5;letter-spacing:0.27px">[Futuri...unds.mp3]</div>
<div class="a" style="left:268px;top:818px;width:15px;height:14px;background:#1e1e1e;"></div>
<svg style="left:270px;top:820px" width="12" height="10" viewBox="0 0 12 10"><path d="M1 5A5 4.5 0 0 1 11 5z" fill="#bdbdbd"/><path d="M5 5h2v5H5z M0 7h12v1.2H0z" fill="#bdbdbd"/><circle cx="4" cy="3" r="0.9" fill="#232323"/><circle cx="8" cy="3" r="0.9" fill="#232323"/></svg>
<div class="a" style="left:299px;top:818px;width:13px;height:14px;background:#1e1e1e;"></div>
<svg style="left:300px;top:820px" width="12" height="11"><path d="M0.5 10.5L11.5 0.5" stroke="#bdbdbd" stroke-width="1.3"/></svg>
<div class="a" style="left:359px;top:818px;width:13px;height:14px;background:#1c1c1c;"></div>
<svg style="left:406px;top:819px" width="13" height="12" viewBox="0 0 13 12"><path d="M8.01 1.12 L8.71 1.45 L9.35 1.88 L9.91 2.40 L10.39 3.00 L10.77 3.66 L11.05 4.36 L11.22 5.09 L11.28 5.83 L11.23 6.57 L11.07 7.29 L10.81 7.97 L10.45 8.60 L10.01 9.17 L9.49 9.66 L8.92 10.07 L8.29 10.39 L7.63 10.60 L6.95 10.72 L6.27 10.74 L5.60 10.65 L4.96 10.47 L4.35 10.20 L3.80 9.85 L3.31 9.42 L2.90 8.93 L2.56 8.40 L2.31 7.82 L2.15 7.22 L2.08 6.61 L2.10 6.01 L2.21 5.42 L2.40 4.87 L2.67 4.35 L3.01 3.88 L3.40 3.48 L3.85 3.14 L4.33 2.88 L4.84 2.69 L5.36 2.59 L5.89 2.56 L6.41 2.61 L6.90 2.73 L7.36 2.92 L7.79 3.18 L8.16 3.49 L8.48 3.84 L8.73 4.23 L8.93 4.65 L9.05 5.08 L9.11 5.52 L9.10 5.95 L9.03 6.37 L8.90 6.77 L8.72 7.13 L8.49 7.45 L8.22 7.73 L7.91 7.96 L7.59 8.14 L7.25 8.26 L6.90 8.33 L6.56 8.35 L6.23 8.31 L5.91 8.23 L5.63 8.10 L5.37 7.94 L5.14 7.74 L4.96 7.52 L4.82 7.28 L4.72 7.03 L4.66 6.78 L4.64 6.53 L4.66 6.29 L4.72 6.06 L4.81 5.86 L4.92 5.68 L5.06 5.53 L5.21 5.41 L5.37 5.32 L5.54 5.26 L5.70 5.23" fill="none" stroke="#c0c0c0" stroke-width="1.15"/></svg>
<div class="a" style="left:424px;top:818px;width:90px;height:14px;background:#1c1c1c;"></div>
<div class="a" style="left:432px;top:819px;font-size:11px;color:#c5c5c5;letter-spacing:0.04px">Aucun(e)</div>
<svg style="left:501px;top:823px" width="8" height="5"><path d="M0.5 0.5L4.0 4L7.5 0.5" fill="none" stroke="#b0b0b0" stroke-width="1.1"/></svg>
<div class="a" style="left:3px;top:834px;width:532px;height:16px;background:#2c2c2c;"></div>
<div class="a" style="left:3px;top:850px;width:532px;height:1px;background:#1a1a1a;"></div>
<div class="a" style="left:51px;top:835px;width:13px;height:14px;background:#1c1c1c;"></div>
<svg style="left:75px;top:838px" width="5" height="8"><path d="M0.5 0.5L4 4L0.5 7.5" fill="none" stroke="#b0b0b0" stroke-width="1"/></svg>
<div class="a" style="left:87px;top:836px;width:12px;height:12px;background:#b8ccb8;"></div>
<div class="a" style="left:108px;top:836px;font-size:11px;color:#b0b0b0;">3</div>
<div class="a" style="left:136px;top:836px;width:16px;height:12px;background:#e8e8e8;border-radius:1px"></div>
<div class="a" style="left:137px;top:837px;width:14px;height:7px;background:linear-gradient(90deg,#999 0 14%,#ff0 14% 35%,#0f0 35% 57%,#f0a 57% 78%,#44f 78%);"></div>
<div class="a" style="left:137px;top:844px;width:14px;height:3px;background:linear-gradient(90deg,#000 0 50%,#eee 50%,#000);"></div>
<div class="a" style="left:157px;top:836px;font-size:11.5px;color:#b5b5b5;letter-spacing:0.27px">[Futuri...unds.mp3]</div>
<div class="a" style="left:268px;top:835px;width:15px;height:14px;background:#1e1e1e;"></div>
<svg style="left:270px;top:837px" width="12" height="10" viewBox="0 0 12 10"><path d="M1 5A5 4.5 0 0 1 11 5z" fill="#bdbdbd"/><path d="M5 5h2v5H5z M0 7h12v1.2H0z" fill="#bdbdbd"/><circle cx="4" cy="3" r="0.9" fill="#232323"/><circle cx="8" cy="3" r="0.9" fill="#232323"/></svg>
<div class="a" style="left:299px;top:835px;width:13px;height:14px;background:#1e1e1e;"></div>
<svg style="left:300px;top:837px" width="12" height="11"><path d="M0.5 10.5L11.5 0.5" stroke="#bdbdbd" stroke-width="1.3"/></svg>
<div class="a" style="left:359px;top:835px;width:13px;height:14px;background:#1c1c1c;"></div>
<svg style="left:406px;top:836px" width="13" height="12" viewBox="0 0 13 12"><path d="M8.01 1.12 L8.71 1.45 L9.35 1.88 L9.91 2.40 L10.39 3.00 L10.77 3.66 L11.05 4.36 L11.22 5.09 L11.28 5.83 L11.23 6.57 L11.07 7.29 L10.81 7.97 L10.45 8.60 L10.01 9.17 L9.49 9.66 L8.92 10.07 L8.29 10.39 L7.63 10.60 L6.95 10.72 L6.27 10.74 L5.60 10.65 L4.96 10.47 L4.35 10.20 L3.80 9.85 L3.31 9.42 L2.90 8.93 L2.56 8.40 L2.31 7.82 L2.15 7.22 L2.08 6.61 L2.10 6.01 L2.21 5.42 L2.40 4.87 L2.67 4.35 L3.01 3.88 L3.40 3.48 L3.85 3.14 L4.33 2.88 L4.84 2.69 L5.36 2.59 L5.89 2.56 L6.41 2.61 L6.90 2.73 L7.36 2.92 L7.79 3.18 L8.16 3.49 L8.48 3.84 L8.73 4.23 L8.93 4.65 L9.05 5.08 L9.11 5.52 L9.10 5.95 L9.03 6.37 L8.90 6.77 L8.72 7.13 L8.49 7.45 L8.22 7.73 L7.91 7.96 L7.59 8.14 L7.25 8.26 L6.90 8.33 L6.56 8.35 L6.23 8.31 L5.91 8.23 L5.63 8.10 L5.37 7.94 L5.14 7.74 L4.96 7.52 L4.82 7.28 L4.72 7.03 L4.66 6.78 L4.64 6.53 L4.66 6.29 L4.72 6.06 L4.81 5.86 L4.92 5.68 L5.06 5.53 L5.21 5.41 L5.37 5.32 L5.54 5.26 L5.70 5.23" fill="none" stroke="#c0c0c0" stroke-width="1.15"/></svg>
<div class="a" style="left:424px;top:835px;width:90px;height:14px;background:#1c1c1c;"></div>
<div class="a" style="left:432px;top:836px;font-size:11px;color:#c5c5c5;letter-spacing:0.04px">Aucun(e)</div>
<svg style="left:501px;top:840px" width="8" height="5"><path d="M0.5 0.5L4.0 4L7.5 0.5" fill="none" stroke="#b0b0b0" stroke-width="1.1"/></svg>
<div class="a" style="left:3px;top:851px;width:532px;height:16px;background:#2c2c2c;"></div>
<div class="a" style="left:3px;top:867px;width:532px;height:1px;background:#1a1a1a;"></div>
<div class="a" style="left:6px;top:852px;width:13px;height:14px;background:#1e1e1e;"></div>
<svg style="left:7px;top:855px" width="11" height="8" viewBox="0 0 11 8"><path d="M0.3 4C3 -0.8 8 -0.8 10.7 4C8 8.8 3 8.8 0.3 4z" fill="#c8c8c8"/><circle cx="5.5" cy="4" r="1.9" fill="#1e1e1e"/></svg>
<div class="a" style="left:37px;top:852px;width:12px;height:14px;background:#1c1c1c;"></div>
<div class="a" style="left:51px;top:852px;width:13px;height:14px;background:#1c1c1c;"></div>
<svg style="left:75px;top:855px" width="5" height="8"><path d="M0.5 0.5L4 4L0.5 7.5" fill="none" stroke="#b0b0b0" stroke-width="1"/></svg>
<div class="a" style="left:87px;top:853px;width:12px;height:12px;background:#c13a3a;"></div>
<div class="a" style="left:108px;top:853px;font-size:11px;color:#b0b0b0;">4</div>
<div class="a" style="left:138px;top:851px;font-family:'Liberation Serif',serif;font-size:14px;color:#c8c8c8">T</div>
<div class="a" style="left:157px;top:853px;font-size:11.5px;color:#b5b5b5;letter-spacing:0.27px">&gt;.transition.efct \</div>
<div class="a" style="left:268px;top:852px;width:15px;height:14px;background:#1e1e1e;"></div>
<svg style="left:270px;top:854px" width="12" height="10" viewBox="0 0 12 10"><path d="M1 5A5 4.5 0 0 1 11 5z" fill="#bdbdbd"/><path d="M5 5h2v5H5z M0 7h12v1.2H0z" fill="#bdbdbd"/><circle cx="4" cy="3" r="0.9" fill="#232323"/><circle cx="8" cy="3" r="0.9" fill="#232323"/></svg>
<div class="a" style="left:284px;top:852px;width:13px;height:14px;background:#1e1e1e;"></div>
<svg style="left:286px;top:855px" width="10" height="10" viewBox="0 0 10 10"><circle cx="5" cy="5" r="2.2" fill="none" stroke="#8a8a8a" stroke-width="1"/><path d="M5 0v1.8M5 8.2v1.8M0 5h1.8M8.2 5h1.8M1.4 1.4l1.3 1.3M7.3 7.3l1.3 1.3M1.4 8.6l1.3-1.3M7.3 2.7l1.3-1.3" stroke="#8a8a8a" stroke-width="0.9"/></svg>
<div class="a" style="left:299px;top:852px;width:13px;height:14px;background:#1e1e1e;"></div>
<svg style="left:300px;top:854px" width="12" height="11"><path d="M0.5 10.5L11.5 0.5" stroke="#bdbdbd" stroke-width="1.3"/></svg>
<div class="a" style="left:314px;top:852px;width:13px;height:14px;background:#1e1e1e;"></div>
<div class="a" style="left:315px;top:853px;font-family:'Liberation Sans',sans-serif;font-style:italic;font-size:13px;color:#bdbdbd;letter-spacing:-0.8px;line-height:12px">fx</div>
<div class="a" style="left:344px;top:852px;width:13px;height:14px;background:#1c1c1c;"></div>
<div class="a" style="left:359px;top:852px;width:13px;height:14px;background:#1c1c1c;"></div>
<div class="a" style="left:374px;top:852px;width:13px;height:14px;background:#1c1c1c;"></div>
<svg style="left:406px;top:853px" width="13" height="12" viewBox="0 0 13 12"><path d="M8.01 1.12 L8.71 1.45 L9.35 1.88 L9.91 2.40 L10.39 3.00 L10.77 3.66 L11.05 4.36 L11.22 5.09 L11.28 5.83 L11.23 6.57 L11.07 7.29 L10.81 7.97 L10.45 8.60 L10.01 9.17 L9.49 9.66 L8.92 10.07 L8.29 10.39 L7.63 10.60 L6.95 10.72 L6.27 10.74 L5.60 10.65 L4.96 10.47 L4.35 10.20 L3.80 9.85 L3.31 9.42 L2.90 8.93 L2.56 8.40 L2.31 7.82 L2.15 7.22 L2.08 6.61 L2.10 6.01 L2.21 5.42 L2.40 4.87 L2.67 4.35 L3.01 3.88 L3.40 3.48 L3.85 3.14 L4.33 2.88 L4.84 2.69 L5.36 2.59 L5.89 2.56 L6.41 2.61 L6.90 2.73 L7.36 2.92 L7.79 3.18 L8.16 3.49 L8.48 3.84 L8.73 4.23 L8.93 4.65 L9.05 5.08 L9.11 5.52 L9.10 5.95 L9.03 6.37 L8.90 6.77 L8.72 7.13 L8.49 7.45 L8.22 7.73 L7.91 7.96 L7.59 8.14 L7.25 8.26 L6.90 8.33 L6.56 8.35 L6.23 8.31 L5.91 8.23 L5.63 8.10 L5.37 7.94 L5.14 7.74 L4.96 7.52 L4.82 7.28 L4.72 7.03 L4.66 6.78 L4.64 6.53 L4.66 6.29 L4.72 6.06 L4.81 5.86 L4.92 5.68 L5.06 5.53 L5.21 5.41 L5.37 5.32 L5.54 5.26 L5.70 5.23" fill="none" stroke="#c0c0c0" stroke-width="1.15"/></svg>
<div class="a" style="left:424px;top:852px;width:90px;height:14px;background:#1c1c1c;"></div>
<div class="a" style="left:432px;top:853px;font-size:11px;color:#c5c5c5;letter-spacing:0.04px">Aucun(e)</div>
<svg style="left:501px;top:857px" width="8" height="5"><path d="M0.5 0.5L4.0 4L7.5 0.5" fill="none" stroke="#b0b0b0" stroke-width="1.1"/></svg>
<div class="a" style="left:3px;top:868px;width:532px;height:16px;background:#2c2c2c;"></div>
<div class="a" style="left:3px;top:884px;width:532px;height:1px;background:#1a1a1a;"></div>
<div class="a" style="left:6px;top:869px;width:13px;height:14px;background:#1e1e1e;"></div>
<svg style="left:7px;top:872px" width="11" height="8" viewBox="0 0 11 8"><path d="M0.3 4C3 -0.8 8 -0.8 10.7 4C8 8.8 3 8.8 0.3 4z" fill="#c8c8c8"/><circle cx="5.5" cy="4" r="1.9" fill="#1e1e1e"/></svg>
<div class="a" style="left:37px;top:869px;width:12px;height:14px;background:#1c1c1c;"></div>
<div class="a" style="left:51px;top:869px;width:13px;height:14px;background:#1c1c1c;"></div>
<svg style="left:75px;top:872px" width="5" height="8"><path d="M0.5 0.5L4 4L0.5 7.5" fill="none" stroke="#b0b0b0" stroke-width="1"/></svg>
<div class="a" style="left:87px;top:870px;width:12px;height:12px;background:#aaaacc;"></div>
<div class="a" style="left:108px;top:870px;font-size:11px;color:#b0b0b0;">5</div>
<div class="a" style="left:140px;top:870px;width:9px;height:12px;background:#f4f4f4;clip-path:polygon(0 0,70% 0,100% 25%,100% 100%,0 100%)"></div>
<div class="a" style="left:142px;top:874px;width:5px;height:5px;background:linear-gradient(160deg,#3a7be0,#4a62c8);"></div>
<div class="a" style="left:157px;top:870px;font-size:11.5px;color:#b5b5b5;letter-spacing:0.42px">[normal.png]</div>
<div class="a" style="left:268px;top:869px;width:15px;height:14px;background:#1e1e1e;"></div>
<svg style="left:270px;top:871px" width="12" height="10" viewBox="0 0 12 10"><path d="M1 5A5 4.5 0 0 1 11 5z" fill="#bdbdbd"/><path d="M5 5h2v5H5z M0 7h12v1.2H0z" fill="#bdbdbd"/><circle cx="4" cy="3" r="0.9" fill="#232323"/><circle cx="8" cy="3" r="0.9" fill="#232323"/></svg>
<div class="a" style="left:299px;top:869px;width:13px;height:14px;background:#1e1e1e;"></div>
<svg style="left:300px;top:871px" width="12" height="11"><path d="M0.5 10.5L11.5 0.5" stroke="#bdbdbd" stroke-width="1.3"/></svg>
<div class="a" style="left:314px;top:869px;width:13px;height:14px;background:#1e1e1e;"></div>
<div class="a" style="left:315px;top:870px;font-family:'Liberation Sans',sans-serif;font-style:italic;font-size:13px;color:#bdbdbd;letter-spacing:-0.8px;line-height:12px">fx</div>
<div class="a" style="left:344px;top:869px;width:13px;height:14px;background:#1c1c1c;"></div>
<div class="a" style="left:359px;top:869px;width:13px;height:14px;background:#1c1c1c;"></div>
<div class="a" style="left:374px;top:869px;width:13px;height:14px;background:#1c1c1c;"></div>
<svg style="left:406px;top:870px" width="13" height="12" viewBox="0 0 13 12"><path d="M8.01 1.12 L8.71 1.45 L9.35 1.88 L9.91 2.40 L10.39 3.00 L10.77 3.66 L11.05 4.36 L11.22 5.09 L11.28 5.83 L11.23 6.57 L11.07 7.29 L10.81 7.97 L10.45 8.60 L10.01 9.17 L9.49 9.66 L8.92 10.07 L8.29 10.39 L7.63 10.60 L6.95 10.72 L6.27 10.74 L5.60 10.65 L4.96 10.47 L4.35 10.20 L3.80 9.85 L3.31 9.42 L2.90 8.93 L2.56 8.40 L2.31 7.82 L2.15 7.22 L2.08 6.61 L2.10 6.01 L2.21 5.42 L2.40 4.87 L2.67 4.35 L3.01 3.88 L3.40 3.48 L3.85 3.14 L4.33 2.88 L4.84 2.69 L5.36 2.59 L5.89 2.56 L6.41 2.61 L6.90 2.73 L7.36 2.92 L7.79 3.18 L8.16 3.49 L8.48 3.84 L8.73 4.23 L8.93 4.65 L9.05 5.08 L9.11 5.52 L9.10 5.95 L9.03 6.37 L8.90 6.77 L8.72 7.13 L8.49 7.45 L8.22 7.73 L7.91 7.96 L7.59 8.14 L7.25 8.26 L6.90 8.33 L6.56 8.35 L6.23 8.31 L5.91 8.23 L5.63 8.10 L5.37 7.94 L5.14 7.74 L4.96 7.52 L4.82 7.28 L4.72 7.03 L4.66 6.78 L4.64 6.53 L4.66 6.29 L4.72 6.06 L4.81 5.86 L4.92 5.68 L5.06 5.53 L5.21 5.41 L5.37 5.32 L5.54 5.26 L5.70 5.23" fill="none" stroke="#c0c0c0" stroke-width="1.15"/></svg>
<div class="a" style="left:424px;top:869px;width:90px;height:14px;background:#1c1c1c;"></div>
<div class="a" style="left:432px;top:870px;font-size:11px;color:#c5c5c5;letter-spacing:0.04px">Aucun(e)</div>
<svg style="left:501px;top:874px" width="8" height="5"><path d="M0.5 0.5L4.0 4L7.5 0.5" fill="none" stroke="#b0b0b0" stroke-width="1.1"/></svg>
<div class="a" style="left:3px;top:885px;width:532px;height:16px;background:#424242;"></div>
<div class="a" style="left:3px;top:901px;width:532px;height:1px;background:#1a1a1a;"></div>
<div class="a" style="left:6px;top:886px;width:13px;height:14px;background:#333;"></div>
<svg style="left:7px;top:889px" width="11" height="8" viewBox="0 0 11 8"><path d="M0.3 4C3 -0.8 8 -0.8 10.7 4C8 8.8 3 8.8 0.3 4z" fill="#c8c8c8"/><circle cx="5.5" cy="4" r="1.9" fill="#1e1e1e"/></svg>
<div class="a" style="left:37px;top:886px;width:12px;height:14px;background:#333;"></div>
<div class="a" style="left:51px;top:886px;width:13px;height:14px;background:#333;"></div>
<svg style="left:75px;top:889px" width="5" height="8"><path d="M0.5 0.5L4 4L0.5 7.5" fill="none" stroke="#b0b0b0" stroke-width="1"/></svg>
<div class="a" style="left:87px;top:887px;width:12px;height:12px;background:#6c78e0;"></div>
<div class="a" style="left:108px;top:887px;font-size:11px;color:#b0b0b0;">6</div>
<svg style="left:137px;top:887px" width="13" height="12" viewBox="0 0 13 12"><path d="M6.5 0L8.2 4.2L12.8 4.5L9.3 7.4L10.4 11.8L6.5 9.4L2.6 11.8L3.7 7.4L0.2 4.5L4.8 4.2z" fill="#c8c8c8"/></svg>
<div class="a" style="left:153px;top:885px;width:111px;height:16px;background:#a8a8a8;"></div>
<div class="a" style="left:157px;top:887px;font-size:11.5px;color:#151515;letter-spacing:0.04px">Calque de forme 1</div>
<div class="a" style="left:268px;top:886px;width:15px;height:14px;background:#2a2a2a;"></div>
<svg style="left:270px;top:888px" width="12" height="10" viewBox="0 0 12 10"><path d="M1 5A5 4.5 0 0 1 11 5z" fill="#bdbdbd"/><path d="M5 5h2v5H5z M0 7h12v1.2H0z" fill="#bdbdbd"/><circle cx="4" cy="3" r="0.9" fill="#232323"/><circle cx="8" cy="3" r="0.9" fill="#232323"/></svg>
<div class="a" style="left:284px;top:886px;width:13px;height:14px;background:#2a2a2a;"></div>
<svg style="left:286px;top:889px" width="10" height="10" viewBox="0 0 10 10"><circle cx="5" cy="5" r="2.2" fill="none" stroke="#8a8a8a" stroke-width="1"/><path d="M5 0v1.8M5 8.2v1.8M0 5h1.8M8.2 5h1.8M1.4 1.4l1.3 1.3M7.3 7.3l1.3 1.3M1.4 8.6l1.3-1.3M7.3 2.7l1.3-1.3" stroke="#8a8a8a" stroke-width="0.9"/></svg>
<div class="a" style="left:299px;top:886px;width:13px;height:14px;background:#2a2a2a;"></div>
<svg style="left:300px;top:888px" width="12" height="11"><path d="M0.5 10.5L11.5 0.5" stroke="#bdbdbd" stroke-width="1.3"/></svg>
<div class="a" style="left:314px;top:886px;width:13px;height:14px;background:#2a2a2a;"></div>
<div class="a" style="left:315px;top:887px;font-family:'Liberation Sans',sans-serif;font-style:italic;font-size:13px;color:#bdbdbd;letter-spacing:-0.8px;line-height:12px">fx</div>
<div class="a" style="left:344px;top:886px;width:13px;height:14px;background:#333;"></div>
<div class="a" style="left:359px;top:886px;width:13px;height:14px;background:#333;"></div>
<div class="a" style="left:374px;top:886px;width:13px;height:14px;background:#333;"></div>
<svg style="left:406px;top:887px" width="13" height="12" viewBox="0 0 13 12"><path d="M8.01 1.12 L8.71 1.45 L9.35 1.88 L9.91 2.40 L10.39 3.00 L10.77 3.66 L11.05 4.36 L11.22 5.09 L11.28 5.83 L11.23 6.57 L11.07 7.29 L10.81 7.97 L10.45 8.60 L10.01 9.17 L9.49 9.66 L8.92 10.07 L8.29 10.39 L7.63 10.60 L6.95 10.72 L6.27 10.74 L5.60 10.65 L4.96 10.47 L4.35 10.20 L3.80 9.85 L3.31 9.42 L2.90 8.93 L2.56 8.40 L2.31 7.82 L2.15 7.22 L2.08 6.61 L2.10 6.01 L2.21 5.42 L2.40 4.87 L2.67 4.35 L3.01 3.88 L3.40 3.48 L3.85 3.14 L4.33 2.88 L4.84 2.69 L5.36 2.59 L5.89 2.56 L6.41 2.61 L6.90 2.73 L7.36 2.92 L7.79 3.18 L8.16 3.49 L8.48 3.84 L8.73 4.23 L8.93 4.65 L9.05 5.08 L9.11 5.52 L9.10 5.95 L9.03 6.37 L8.90 6.77 L8.72 7.13 L8.49 7.45 L8.22 7.73 L7.91 7.96 L7.59 8.14 L7.25 8.26 L6.90 8.33 L6.56 8.35 L6.23 8.31 L5.91 8.23 L5.63 8.10 L5.37 7.94 L5.14 7.74 L4.96 7.52 L4.82 7.28 L4.72 7.03 L4.66 6.78 L4.64 6.53 L4.66 6.29 L4.72 6.06 L4.81 5.86 L4.92 5.68 L5.06 5.53 L5.21 5.41 L5.37 5.32 L5.54 5.26 L5.70 5.23" fill="none" stroke="#c0c0c0" stroke-width="1.15"/></svg>
<div class="a" style="left:424px;top:886px;width:90px;height:14px;background:#1c1c1c;"></div>
<div class="a" style="left:432px;top:887px;font-size:11px;color:#c5c5c5;letter-spacing:0.04px">Aucun(e)</div>
<svg style="left:501px;top:891px" width="8" height="5"><path d="M0.5 0.5L4.0 4L7.5 0.5" fill="none" stroke="#b0b0b0" stroke-width="1.1"/></svg>
<div class="a" style="left:514px;top:885px;width:20px;height:16px;background:#424242;"></div>
<div class="a" style="left:3px;top:902px;width:532px;height:16px;background:#2c2c2c;"></div>
<div class="a" style="left:3px;top:918px;width:532px;height:1px;background:#1a1a1a;"></div>
<div class="a" style="left:6px;top:903px;width:13px;height:14px;background:#1e1e1e;"></div>
<svg style="left:7px;top:906px" width="11" height="8" viewBox="0 0 11 8"><path d="M0.3 4C3 -0.8 8 -0.8 10.7 4C8 8.8 3 8.8 0.3 4z" fill="#c8c8c8"/><circle cx="5.5" cy="4" r="1.9" fill="#1e1e1e"/></svg>
<div class="a" style="left:37px;top:903px;width:12px;height:14px;background:#1c1c1c;"></div>
<div class="a" style="left:51px;top:903px;width:13px;height:14px;background:#1c1c1c;"></div>
<svg style="left:75px;top:906px" width="5" height="8"><path d="M0.5 0.5L4 4L0.5 7.5" fill="none" stroke="#b0b0b0" stroke-width="1"/></svg>
<div class="a" style="left:87px;top:904px;width:12px;height:12px;background:#aaaacc;"></div>
<div class="a" style="left:108px;top:904px;font-size:11px;color:#b0b0b0;">7</div>
<div class="a" style="left:140px;top:904px;width:9px;height:12px;background:#f4f4f4;clip-path:polygon(0 0,70% 0,100% 25%,100% 100%,0 100%)"></div>
<div class="a" style="left:142px;top:908px;width:5px;height:5px;background:linear-gradient(160deg,#3a7be0,#4a62c8);"></div>
<div class="a" style="left:157px;top:904px;font-size:11.5px;color:#b5b5b5;letter-spacing:0.62px">[fond.png]</div>
<div class="a" style="left:268px;top:903px;width:15px;height:14px;background:#1e1e1e;"></div>
<svg style="left:270px;top:905px" width="12" height="10" viewBox="0 0 12 10"><path d="M1 5A5 4.5 0 0 1 11 5z" fill="#bdbdbd"/><path d="M5 5h2v5H5z M0 7h12v1.2H0z" fill="#bdbdbd"/><circle cx="4" cy="3" r="0.9" fill="#232323"/><circle cx="8" cy="3" r="0.9" fill="#232323"/></svg>
<div class="a" style="left:299px;top:903px;width:13px;height:14px;background:#1e1e1e;"></div>
<svg style="left:300px;top:905px" width="12" height="11"><path d="M0.5 10.5L11.5 0.5" stroke="#bdbdbd" stroke-width="1.3"/></svg>
<div class="a" style="left:314px;top:903px;width:13px;height:14px;background:#1e1e1e;"></div>
<div class="a" style="left:315px;top:904px;font-family:'Liberation Sans',sans-serif;font-style:italic;font-size:13px;color:#bdbdbd;letter-spacing:-0.8px;line-height:12px">fx</div>
<div class="a" style="left:344px;top:903px;width:13px;height:14px;background:#1c1c1c;"></div>
<div class="a" style="left:359px;top:903px;width:13px;height:14px;background:#1c1c1c;"></div>
<div class="a" style="left:374px;top:903px;width:13px;height:14px;background:#1c1c1c;"></div>
<svg style="left:406px;top:904px" width="13" height="12" viewBox="0 0 13 12"><path d="M8.01 1.12 L8.71 1.45 L9.35 1.88 L9.91 2.40 L10.39 3.00 L10.77 3.66 L11.05 4.36 L11.22 5.09 L11.28 5.83 L11.23 6.57 L11.07 7.29 L10.81 7.97 L10.45 8.60 L10.01 9.17 L9.49 9.66 L8.92 10.07 L8.29 10.39 L7.63 10.60 L6.95 10.72 L6.27 10.74 L5.60 10.65 L4.96 10.47 L4.35 10.20 L3.80 9.85 L3.31 9.42 L2.90 8.93 L2.56 8.40 L2.31 7.82 L2.15 7.22 L2.08 6.61 L2.10 6.01 L2.21 5.42 L2.40 4.87 L2.67 4.35 L3.01 3.88 L3.40 3.48 L3.85 3.14 L4.33 2.88 L4.84 2.69 L5.36 2.59 L5.89 2.56 L6.41 2.61 L6.90 2.73 L7.36 2.92 L7.79 3.18 L8.16 3.49 L8.48 3.84 L8.73 4.23 L8.93 4.65 L9.05 5.08 L9.11 5.52 L9.10 5.95 L9.03 6.37 L8.90 6.77 L8.72 7.13 L8.49 7.45 L8.22 7.73 L7.91 7.96 L7.59 8.14 L7.25 8.26 L6.90 8.33 L6.56 8.35 L6.23 8.31 L5.91 8.23 L5.63 8.10 L5.37 7.94 L5.14 7.74 L4.96 7.52 L4.82 7.28 L4.72 7.03 L4.66 6.78 L4.64 6.53 L4.66 6.29 L4.72 6.06 L4.81 5.86 L4.92 5.68 L5.06 5.53 L5.21 5.41 L5.37 5.32 L5.54 5.26 L5.70 5.23" fill="none" stroke="#c0c0c0" stroke-width="1.15"/></svg>
<div class="a" style="left:424px;top:903px;width:90px;height:14px;background:#1c1c1c;"></div>
<div class="a" style="left:432px;top:904px;font-size:11px;color:#c5c5c5;letter-spacing:0.04px">Aucun(e)</div>
<svg style="left:501px;top:908px" width="8" height="5"><path d="M0.5 0.5L4.0 4L7.5 0.5" fill="none" stroke="#b0b0b0" stroke-width="1.1"/></svg>
<div class="a" style="left:3px;top:919px;width:532px;height:16px;background:#2c2c2c;"></div>
<div class="a" style="left:3px;top:935px;width:532px;height:1px;background:#1a1a1a;"></div>
<div class="a" style="left:6px;top:920px;width:12px;height:14px;background:#1c1c1c;"></div>
<div class="a" style="left:51px;top:920px;width:13px;height:14px;background:#1c1c1c;"></div>
<svg style="left:75px;top:923px" width="5" height="8"><path d="M0.5 0.5L4 4L0.5 7.5" fill="none" stroke="#b0b0b0" stroke-width="1"/></svg>
<div class="a" style="left:87px;top:921px;width:12px;height:12px;background:#aaaacc;"></div>
<div class="a" style="left:108px;top:921px;font-size:11px;color:#b0b0b0;">8</div>
<div class="a" style="left:136px;top:921px;width:16px;height:12px;background:#e8e8e8;border-radius:1px"></div>
<div class="a" style="left:137px;top:922px;width:14px;height:7px;background:linear-gradient(90deg,#999 0 14%,#ff0 14% 35%,#0f0 35% 57%,#f0a 57% 78%,#44f 78%);"></div>
<div class="a" style="left:137px;top:929px;width:14px;height:3px;background:linear-gradient(90deg,#000 0 50%,#eee 50%,#000);"></div>
<div class="a" style="left:157px;top:921px;font-size:11.5px;color:#b5b5b5;letter-spacing:0.19px">[fox ve...rdBleu.jpg]</div>
<div class="a" style="left:268px;top:920px;width:15px;height:14px;background:#1e1e1e;"></div>
<svg style="left:270px;top:922px" width="12" height="10" viewBox="0 0 12 10"><path d="M1 5A5 4.5 0 0 1 11 5z" fill="#bdbdbd"/><path d="M5 5h2v5H5z M0 7h12v1.2H0z" fill="#bdbdbd"/><circle cx="4" cy="3" r="0.9" fill="#232323"/><circle cx="8" cy="3" r="0.9" fill="#232323"/></svg>
<div class="a" style="left:299px;top:920px;width:13px;height:14px;background:#1e1e1e;"></div>
<svg style="left:300px;top:922px" width="12" height="11"><path d="M0.5 10.5L11.5 0.5" stroke="#bdbdbd" stroke-width="1.3"/></svg>
<div class="a" style="left:344px;top:920px;width:13px;height:14px;background:#1c1c1c;"></div>
<div class="a" style="left:359px;top:920px;width:13px;height:14px;background:#1c1c1c;"></div>
<div class="a" style="left:374px;top:920px;width:13px;height:14px;background:#1c1c1c;"></div>
<svg style="left:406px;top:921px" width="13" height="12" viewBox="0 0 13 12"><path d="M8.01 1.12 L8.71 1.45 L9.35 1.88 L9.91 2.40 L10.39 3.00 L10.77 3.66 L11.05 4.36 L11.22 5.09 L11.28 5.83 L11.23 6.57 L11.07 7.29 L10.81 7.97 L10.45 8.60 L10.01 9.17 L9.49 9.66 L8.92 10.07 L8.29 10.39 L7.63 10.60 L6.95 10.72 L6.27 10.74 L5.60 10.65 L4.96 10.47 L4.35 10.20 L3.80 9.85 L3.31 9.42 L2.90 8.93 L2.56 8.40 L2.31 7.82 L2.15 7.22 L2.08 6.61 L2.10 6.01 L2.21 5.42 L2.40 4.87 L2.67 4.35 L3.01 3.88 L3.40 3.48 L3.85 3.14 L4.33 2.88 L4.84 2.69 L5.36 2.59 L5.89 2.56 L6.41 2.61 L6.90 2.73 L7.36 2.92 L7.79 3.18 L8.16 3.49 L8.48 3.84 L8.73 4.23 L8.93 4.65 L9.05 5.08 L9.11 5.52 L9.10 5.95 L9.03 6.37 L8.90 6.77 L8.72 7.13 L8.49 7.45 L8.22 7.73 L7.91 7.96 L7.59 8.14 L7.25 8.26 L6.90 8.33 L6.56 8.35 L6.23 8.31 L5.91 8.23 L5.63 8.10 L5.37 7.94 L5.14 7.74 L4.96 7.52 L4.82 7.28 L4.72 7.03 L4.66 6.78 L4.64 6.53 L4.66 6.29 L4.72 6.06 L4.81 5.86 L4.92 5.68 L5.06 5.53 L5.21 5.41 L5.37 5.32 L5.54 5.26 L5.70 5.23" fill="none" stroke="#c0c0c0" stroke-width="1.15"/></svg>
<div class="a" style="left:424px;top:920px;width:90px;height:14px;background:#1c1c1c;"></div>
<div class="a" style="left:432px;top:921px;font-size:11px;color:#c5c5c5;letter-spacing:0.04px">Aucun(e)</div>
<svg style="left:501px;top:925px" width="8" height="5"><path d="M0.5 0.5L4.0 4L7.5 0.5" fill="none" stroke="#b0b0b0" stroke-width="1.1"/></svg>
<div class="a" style="left:534px;top:780px;width:1px;height:280px;background:#111;"></div>
<div class="a" style="left:535px;top:750px;width:1366px;height:10px;background:#6e6e6e;border-top:1px solid #111;border-bottom:1px solid #111"></div>
<div class="a" style="left:535px;top:750px;width:7px;height:10px;background:#2d8ceb;border-radius:5px 0 0 5px"></div>
<div class="a" style="left:1894px;top:750px;width:7px;height:10px;background:#2d8ceb;border-radius:0 5px 5px 0"></div>
<div class="a" style="left:562px;top:751px;width:1px;height:8px;background:#4a9be8;"></div>
<div class="a" style="left:538px;top:762px;font-size:10.5px;color:#a8a8a8;letter-spacing:-0.3px">:00s</div>
<div class="a" style="left:542px;top:774px;width:1px;height:11px;background:#7a7a7a;"></div>
<div class="a" style="left:623px;top:762px;font-size:10.5px;color:#a8a8a8;letter-spacing:-0.3px">02s</div>
<div class="a" style="left:633px;top:774px;width:1px;height:11px;background:#7a7a7a;"></div>
<div class="a" style="left:713px;top:762px;font-size:10.5px;color:#a8a8a8;letter-spacing:-0.3px">04s</div>
<div class="a" style="left:723px;top:774px;width:1px;height:11px;background:#7a7a7a;"></div>
<div class="a" style="left:803px;top:762px;font-size:10.5px;color:#a8a8a8;letter-spacing:-0.3px">06s</div>
<div class="a" style="left:813px;top:774px;width:1px;height:11px;background:#7a7a7a;"></div>
<div class="a" style="left:893px;top:762px;font-size:10.5px;color:#a8a8a8;letter-spacing:-0.3px">08s</div>
<div class="a" style="left:903px;top:774px;width:1px;height:11px;background:#7a7a7a;"></div>
<div class="a" style="left:984px;top:762px;font-size:10.5px;color:#a8a8a8;letter-spacing:-0.3px">10s</div>
<div class="a" style="left:993px;top:774px;width:1px;height:11px;background:#7a7a7a;"></div>
<div class="a" style="left:1074px;top:762px;font-size:10.5px;color:#a8a8a8;letter-spacing:-0.3px">12s</div>
<div class="a" style="left:1083px;top:774px;width:1px;height:11px;background:#7a7a7a;"></div>
<div class="a" style="left:1164px;top:762px;font-size:10.5px;color:#a8a8a8;letter-spacing:-0.3px">14s</div>
<div class="a" style="left:1173px;top:774px;width:1px;height:11px;background:#7a7a7a;"></div>
<div class="a" style="left:1254px;top:762px;font-size:10.5px;color:#a8a8a8;letter-spacing:-0.3px">16s</div>
<div class="a" style="left:1263px;top:774px;width:1px;height:11px;background:#7a7a7a;"></div>
<div class="a" style="left:1344px;top:762px;font-size:10.5px;color:#a8a8a8;letter-spacing:-0.3px">18s</div>
<div class="a" style="left:1354px;top:774px;width:1px;height:11px;background:#7a7a7a;"></div>
<div class="a" style="left:1434px;top:762px;font-size:10.5px;color:#a8a8a8;letter-spacing:-0.3px">20s</div>
<div class="a" style="left:1444px;top:774px;width:1px;height:11px;background:#7a7a7a;"></div>
<div class="a" style="left:1524px;top:762px;font-size:10.5px;color:#a8a8a8;letter-spacing:-0.3px">22s</div>
<div class="a" style="left:1534px;top:774px;width:1px;height:11px;background:#7a7a7a;"></div>
<div class="a" style="left:1614px;top:762px;font-size:10.5px;color:#a8a8a8;letter-spacing:-0.3px">24s</div>
<div class="a" style="left:1624px;top:774px;width:1px;height:11px;background:#7a7a7a;"></div>
<div class="a" style="left:1705px;top:762px;font-size:10.5px;color:#a8a8a8;letter-spacing:-0.3px">26s</div>
<div class="a" style="left:1714px;top:774px;width:1px;height:11px;background:#7a7a7a;"></div>
<div class="a" style="left:1795px;top:762px;font-size:10.5px;color:#a8a8a8;letter-spacing:-0.3px">28s</div>
<div class="a" style="left:1804px;top:774px;width:1px;height:11px;background:#7a7a7a;"></div>
<div class="a" style="left:1885px;top:762px;font-size:10.5px;color:#a8a8a8;letter-spacing:-0.3px">30s</div>
<div class="a" style="left:1894px;top:774px;width:1px;height:11px;background:#7a7a7a;"></div>
<div class="a" style="left:535px;top:795px;width:1366px;height:1px;background:#0e0e0e;"></div>
<div class="a" style="left:535px;top:799px;width:1383px;height:1px;background:#0e0e0e;"></div>
<div class="a" style="left:536px;top:780px;width:137px;height:15px;background:#6a6a6a;border-top:1px solid #222"></div>
<div class="a" style="left:536px;top:780px;width:6px;height:15px;background:#2d8ceb;border-radius:4px 0 0 4px"></div>
<div class="a" style="left:667px;top:780px;width:6px;height:15px;background:#2d8ceb;border-radius:0 4px 4px 0"></div>
<div class="a" style="left:542px;top:796px;width:126px;height:3px;background:#19c21e;"></div>
<div class="a" style="left:535px;top:800px;width:1366px;height:17px;background:#232323;"></div>
<div class="a" style="left:535px;top:816px;width:1366px;height:1px;background:#1c1c1c;"></div>
<div class="a" style="left:535px;top:817px;width:1366px;height:17px;background:#232323;"></div>
<div class="a" style="left:535px;top:833px;width:1366px;height:1px;background:#1c1c1c;"></div>
<div class="a" style="left:535px;top:834px;width:1366px;height:17px;background:#232323;"></div>
<div class="a" style="left:535px;top:850px;width:1366px;height:1px;background:#1c1c1c;"></div>
<div class="a" style="left:535px;top:851px;width:1366px;height:17px;background:#232323;"></div>
<div class="a" style="left:535px;top:867px;width:1366px;height:1px;background:#1c1c1c;"></div>
<div class="a" style="left:535px;top:868px;width:1366px;height:17px;background:#232323;"></div>
<div class="a" style="left:535px;top:884px;width:1366px;height:1px;background:#1c1c1c;"></div>
<div class="a" style="left:535px;top:885px;width:1366px;height:17px;background:#232323;"></div>
<div class="a" style="left:535px;top:901px;width:1366px;height:1px;background:#1c1c1c;"></div>
<div class="a" style="left:535px;top:902px;width:1366px;height:17px;background:#232323;"></div>
<div class="a" style="left:535px;top:918px;width:1366px;height:1px;background:#1c1c1c;"></div>
<div class="a" style="left:535px;top:919px;width:1366px;height:17px;background:#232323;"></div>
<div class="a" style="left:535px;top:935px;width:1366px;height:1px;background:#1c1c1c;"></div>
<div class="a" style="left:535px;top:800px;width:1366px;height:16px;background:#2b2b2b;"></div>
<div class="a" style="left:535px;top:800px;width:1366px;height:16px;background:#50534e;border-bottom:1px solid #6c786a"></div>
<div class="a" style="left:535px;top:817px;width:1366px;height:16px;background:#2b2b2b;"></div>
<div class="a" style="left:535px;top:817px;width:1366px;height:16px;background:#50534e;border-bottom:1px solid #6c786a"></div>
<div class="a" style="left:535px;top:834px;width:1366px;height:16px;background:#2b2b2b;"></div>
<div class="a" style="left:535px;top:834px;width:1204px;height:16px;background:#50534e;border-bottom:1px solid #6c786a"></div>
<div class="a" style="left:563px;top:800px;width:83px;height:15px;background:#7a8478;"></div>
<div class="a" style="left:637px;top:817px;width:29px;height:15px;background:#7a8478;"></div>
<div class="a" style="left:546px;top:834px;width:43px;height:15px;background:#7a8478;"></div>
<div class="a" style="left:546px;top:848px;width:43px;height:2px;background:repeating-linear-gradient(90deg,#3d7fc9 0 2px,transparent 2px 4px);"></div>
<div class="a" style="left:535px;top:851px;width:1366px;height:16px;background:#303030;"></div>
<div class="a" style="left:542px;top:851px;width:126px;height:16px;background:#393939;"></div>
<div class="a" style="left:535px;top:868px;width:1366px;height:16px;background:#303030;"></div>
<div class="a" style="left:542px;top:868px;width:126px;height:16px;background:#393939;"></div>
<div class="a" style="left:572px;top:851px;width:63px;height:16px;background:#7a3a3b;border-bottom:1px solid #8a4444"></div>
<div class="a" style="left:571px;top:868px;width:79px;height:16px;background:#73727f;"></div>
<div class="a" style="left:535px;top:885px;width:1366px;height:16px;background:#2e2e2e;"></div>
<div class="a" style="left:542px;top:885px;width:1352px;height:16px;background:linear-gradient(#aab5f2 0,#aab5f2 1px,#6b79dd 2px,#5a69d6 60%,#4e5fd0 100%);"></div>
<div class="a" style="left:535px;top:902px;width:1366px;height:16px;background:#2c2c2c;"></div>
<div class="a" style="left:542px;top:902px;width:1352px;height:16px;background:#6d6c7e;"></div>
<div class="a" style="left:542px;top:902px;width:126px;height:16px;background:#757487;"></div>
<div class="a" style="left:535px;top:919px;width:1366px;height:16px;background:#2c2c2c;"></div>
<div class="a" style="left:542px;top:919px;width:1352px;height:16px;background:#6d6c7e;"></div>
<div class="a" style="left:542px;top:919px;width:126px;height:16px;background:#757487;"></div>
<div class="a" style="left:535px;top:936px;width:1366px;height:124px;background:#232323;"></div>
<div class="a" style="left:542px;top:936px;width:126px;height:124px;background:#333333;"></div>
<div class="a" style="left:562px;top:778px;width:1px;height:282px;background:#2d8ceb;"></div>
<svg style="left:556px;top:765px" width="13" height="14" viewBox="0 0 13 14"><path d="M0 0H13V6L6.5 14L0 6z" fill="#2d8ceb"/><path d="M4.5 6h4M6.5 6v8" stroke="#163a60" stroke-width="1"/></svg>
<div class="a" style="left:1901px;top:780px;width:17px;height:280px;background:#232323;"></div>
<svg style="left:1905px;top:782px" width="11" height="14"><path d="M0 0H11V9L5.5 14L0 9z" fill="#bdbdbd"/></svg>
<svg style="left:1903px;top:803px" width="13" height="12" viewBox="0 0 13 12"><path d="M6 1H13V8H6z" fill="#bdbdbd"/><path d="M6 1L0.5 7" stroke="#bdbdbd" stroke-width="1.2"/><circle cx="6" cy="8" r="2.5" fill="#232323" stroke="#bdbdbd" stroke-width="1.2"/></svg>
<div class="a" style="left:3px;top:1060px;width:638px;height:1px;background:#111;"></div>
<div class="a" style="left:2px;top:1061px;width:1916px;height:17px;background:#232323;"></div>
<div class="a" style="left:8px;top:1063px;width:16px;height:14px;background:#1a2a3a;border-radius:2px"></div>
<svg style="left:10px;top:1065px" width="12" height="11" viewBox="0 0 12 11"><rect x="0.5" y="0.5" width="7" height="7" fill="none" stroke="#2d8ceb" stroke-width="1.1"/><rect x="4.5" y="3.5" width="7" height="7" fill="none" stroke="#2d8ceb" stroke-width="1.1"/></svg>
<svg style="left:28px;top:1064px" width="12" height="12" viewBox="0 0 12 12"><rect x="4.5" y="4.5" width="7" height="7" fill="none" stroke="#bdbdbd" stroke-width="1.1"/><circle cx="4" cy="4" r="3.5" fill="none" stroke="#bdbdbd" stroke-width="1.1"/></svg>
<svg style="left:47px;top:1064px" width="11" height="12" viewBox="0 0 11 12"><path d="M3 0h5v12H3z" fill="#bdbdbd"/><path d="M0 6L3 3V9zM11 6L8 3V9z" fill="#bdbdbd"/></svg>
<svg style="left:65px;top:1064px" width="14" height="12" viewBox="0 0 14 12"><circle cx="5" cy="4.5" r="4" fill="#bdbdbd"/><path d="M1 12C1 8 9 8 9 12z" fill="#bdbdbd"/><path d="M10 3h3M11.5 3v6" stroke="#bdbdbd" stroke-width="1.1"/></svg>
<div class="a" style="left:107px;top:1064px;font-size:10.5px;color:#a0a0a0;letter-spacing:0.3px">Temps de rendu des images :</div>
<div class="a" style="left:255px;top:1064px;font-size:10.5px;color:#5cc75c;letter-spacing:0.73px">41 ms</div>
<div class="a" style="left:308px;top:1063px;width:133px;height:15px;background:#1c1c1c;border:1px solid #2e2e2e;border-radius:2px"></div>
<div class="a" style="left:336px;top:1064px;font-size:10.5px;color:#a8a8a8;letter-spacing:0.32px">Options/modes</div>
<svg style="left:540px;top:1067px" width="11" height="5"><path d="M0 5L5.5 0L11 5z" fill="#bdbdbd"/></svg>
<div class="a" style="left:569px;top:1069px;width:40px;height:2px;background:#3a3a3a;"></div>
<div class="a" style="left:561px;top:1066px;width:10px;height:10px;background:transparent;border:1.5px solid #bdbdbd;border-radius:50%"></div>
<svg style="left:620px;top:1066px" width="18" height="7"><path d="M0 7L5 2L8 5L11 0L18 7z" fill="#bdbdbd"/></svg>
</body></html>
